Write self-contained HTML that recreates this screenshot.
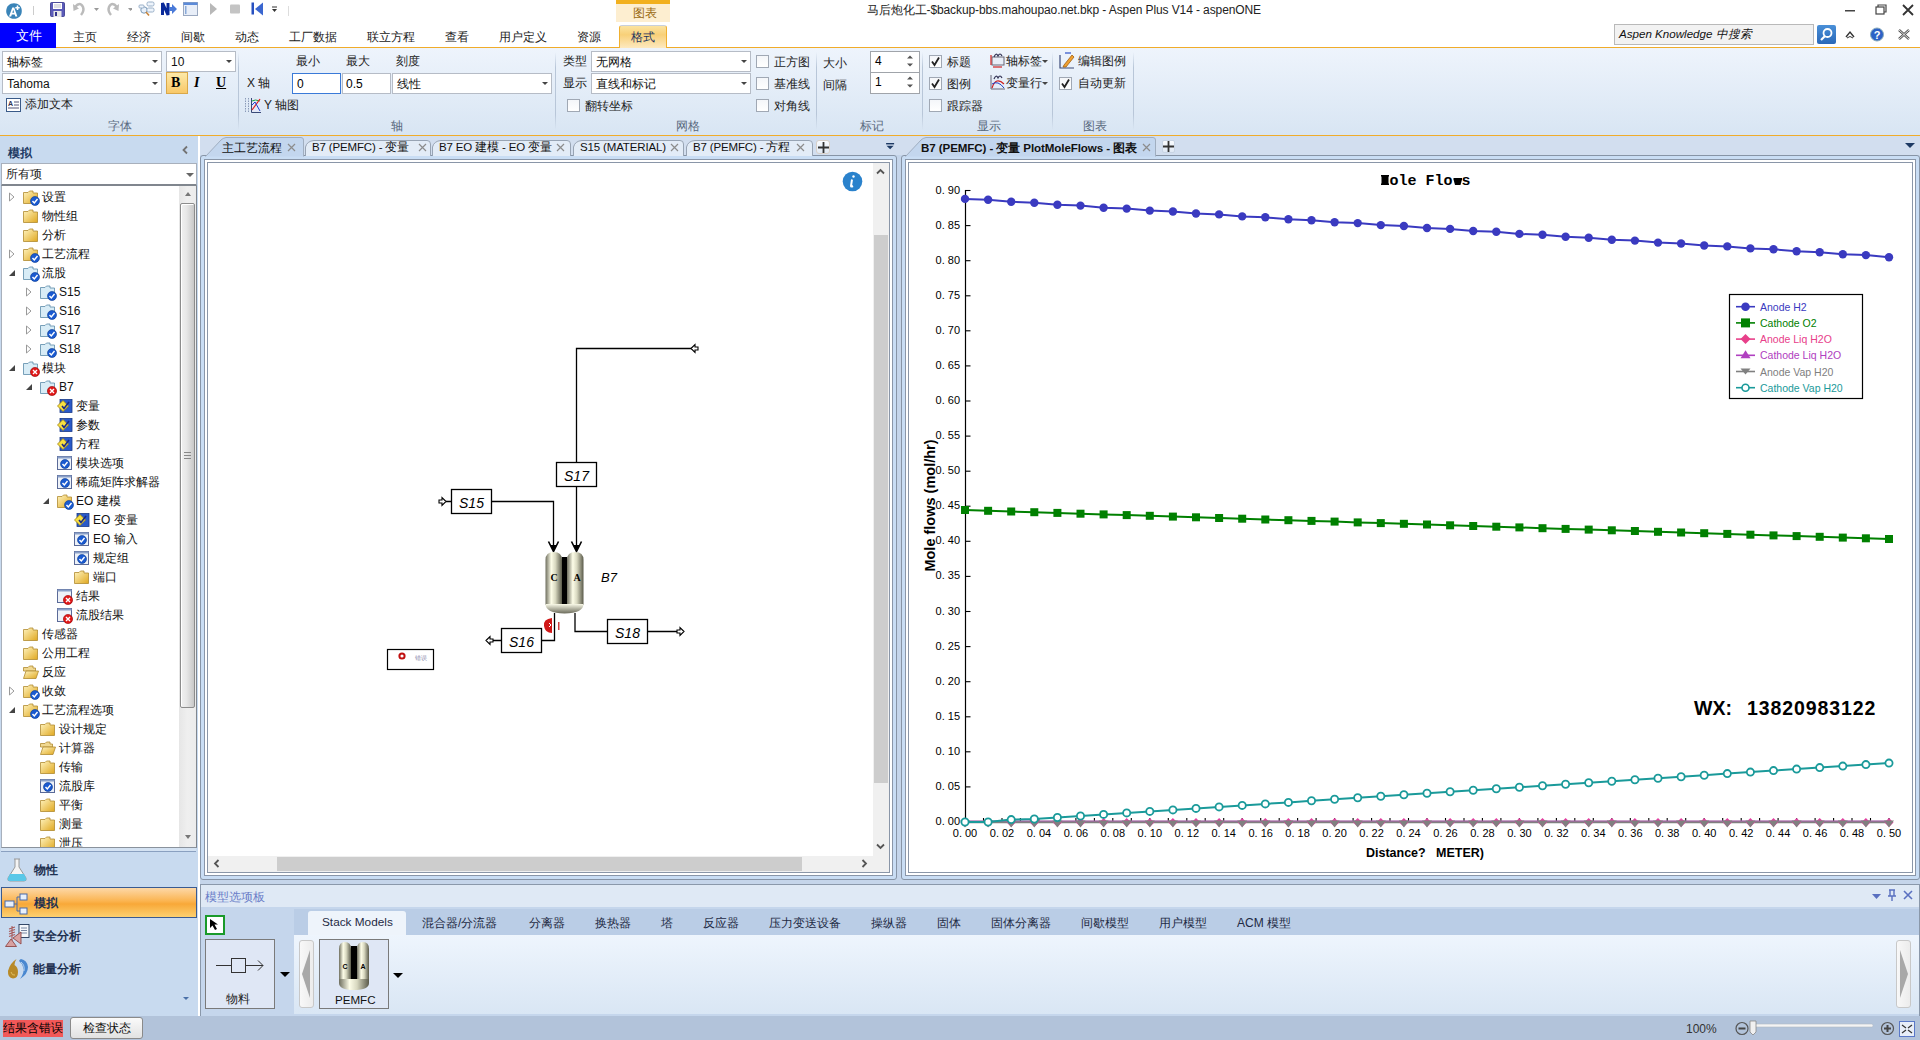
<!DOCTYPE html>
<html><head><meta charset="utf-8"><style>

*{box-sizing:border-box;margin:0;padding:0}
html,body{width:1920px;height:1040px;overflow:hidden;background:#c5d5ea;font-family:"Liberation Sans",sans-serif;font-size:12px;color:#000}
.a{position:absolute}
.t{position:absolute;white-space:nowrap;line-height:1}


.cb{position:absolute;background:#fff;border:1px solid #b6bcc6}
.dd{position:absolute;width:0;height:0;border-left:3px solid transparent;border-right:3px solid transparent;border-top:3px solid #444}
.chk{position:absolute;width:13px;height:13px;border:1px solid #a0a8b4;background:linear-gradient(#f4f6f9,#fff)}
.gl{position:absolute;color:#5a6a80;font-size:12px;white-space:nowrap;line-height:1}
.sep{position:absolute;width:1px;background:linear-gradient(rgba(180,195,215,0),#b8c6d8 20%,#b8c6d8 80%,rgba(180,195,215,0))}


.ti{position:absolute;font-size:12px;color:#111;white-space:nowrap;line-height:1}


.frm{position:absolute;border:1px solid #8794a6;border-radius:3px;background:#c9ddf4}
.frm2{position:absolute;border:1px solid #8a96a8;background:#fff}
.frm3{position:absolute;border:1px solid #8a96a8;background:#fff}
.tab{position:absolute;font-size:12px;white-space:nowrap;line-height:1;color:#111}
.xx{position:absolute;color:#8a8a8a;font-size:12px;line-height:1}

</style></head><body>
<div class="a" style="left:0px;top:0px;width:1920px;height:47px;background:#fff"></div>
<div class="a" style="left:0px;top:47px;width:1920px;height:1px;background:#f0ac2a"></div>
<svg class="a" style="left:6px;top:3px" width="16" height="16" viewBox="0 0 16 16"><path d="M8 0.2 C12.5 0.2 15.8 3 15.8 8 C15.8 12.8 12.5 15.8 8 15.8 C3.5 15.8 0.2 12.5 0.2 8 C0.2 3.5 3.5 0.2 8 0.2Z" fill="#3a84b8"/><path d="M3 13.5 L6.3 4.5 H8.2 L11.4 13.5 H9.3 L8.7 11.5 H5.8 L5.2 13.5Z M6.3 9.8 H8.2 L7.25 6.8Z" fill="#fff"/><path d="M11.5 2.5 V7 M9.3 4.75 H13.7" stroke="#fff" stroke-width="1.6"/></svg>
<div class="a" style="left:33px;top:6px;width:1px;height:9px;background:#ccc"></div>
<svg class="a" style="left:50px;top:2px" width="15" height="15" viewBox="0 0 15 15"><path d="M0.5 1.5 Q0.5 0.5 1.5 0.5 H13.5 Q14.5 0.5 14.5 1.5 V13.5 Q14.5 14.5 13.5 14.5 H1.5 Q0.5 14.5 0.5 13.5Z" fill="#5a5ab8" stroke="#33338a" stroke-width="0.8"/><rect x="3" y="1" width="9" height="6" fill="#fff"/><path d="M4 3 H11 M4 5 H11" stroke="#aab" stroke-width="0.8"/><rect x="3.5" y="9" width="8" height="6" fill="#e8e8e8"/><rect x="5" y="10" width="2" height="4" fill="#33338a"/></svg>
<svg class="a" style="left:72px;top:1px" width="60" height="16" viewBox="0 0 60 16"><path d="M3 6 Q8 0 11 6 Q12.5 10 9 14" fill="none" stroke="#bbb" stroke-width="2.5"/><path d="M1 3 L1.5 10 L7 7.5 Z" fill="#bbb"/><path d="M22 7 L27 7 L24.5 10Z" fill="#999"/><path d="M45 6 Q40 0 37 6 Q35.5 10 39 14" fill="none" stroke="#bbb" stroke-width="2.5"/><path d="M47 3 L46.5 10 L41 7.5 Z" fill="#bbb"/><path d="M56 7 L61 7 L58.5 10Z" fill="#999"/></svg>
<svg class="a" style="left:138px;top:0px" width="150" height="17" viewBox="0 0 150 17"><circle cx="6" cy="10" r="3.2" fill="#e8f0fa" stroke="#7a9ab8" stroke-width="1"/><rect x="9" y="2" width="7" height="4" rx="1.5" fill="#eef4fb" stroke="#9ab0c8"/><rect x="9" y="8" width="7" height="4" rx="1.5" fill="#eef4fb" stroke="#9ab0c8"/><rect x="1" y="5" width="5" height="3" rx="1" fill="#eef4fb" stroke="#9ab0c8"/><path d="M8 12 L11 15.5" stroke="#c8843a" stroke-width="1.6"/><path d="M24.5 15 V3 L30 15 V3" stroke="#0a2a9a" stroke-width="3" fill="none"/><path d="M31 7 L34 7 L34 4 L39 9 L34 14 L34 11 L31 11Z" fill="#4a7ad8"/><rect x="45.5" y="2.5" width="14" height="13" fill="#e8eef8" stroke="#9aa8c0"/><rect x="45.5" y="2.5" width="14" height="2.5" fill="#5b8ad8"/><rect x="47" y="6" width="1.5" height="8" fill="#8aaad8"/><path d="M72 3 L79 9 L72 15Z" fill="#b8b8b8"/><rect x="92" y="4.5" width="10" height="9" rx="1" fill="#c4c4c4"/><rect x="113.5" y="2.5" width="2.5" height="12" fill="#2750c0"/><path d="M125 2.5 L117 9 L125 15.5Z" fill="#3a66d0"/><path d="M134 7 H139" stroke="#333" stroke-width="1"/><path d="M134 9 L139 9 L136.5 12Z" fill="#333"/></svg>
<div class="a" style="left:288px;top:6px;width:1px;height:10px;background:#ddd"></div>
<div class="a" style="left:616px;top:0px;width:54px;height:22px;background:#fdeed0"></div>
<div class="a" style="left:616px;top:0px;width:54px;height:4px;background:#f2b01e"></div>
<div class="t" style="left:633px;top:7px;color:#9a6a10;font-size:12px">图表</div>
<div class="t" style="left:867px;top:4px;font-size:12px;letter-spacing:-0.1px;color:#222">马后炮化工-$backup-bbs.mahoupao.net.bkp - Aspen Plus V14 - aspenONE</div>
<svg class="a" style="left:1840px;top:2px" width="80" height="16" viewBox="0 0 80 16"><rect x="5" y="8" width="10" height="1.5" fill="#444"/><rect x="36" y="5" width="8" height="7" fill="none" stroke="#444" stroke-width="1.2"/><path d="M38 5 V3 H46 V10 H44" fill="none" stroke="#444" stroke-width="1.2"/><path d="M63 3 L73 13 M73 3 L63 13" stroke="#333" stroke-width="1.8"/></svg>
<div class="a" style="left:0px;top:23px;width:56px;height:25px;background:#0000ff"></div>
<div class="t" style="left:16px;top:30px;color:#fff;font-size:12.5px">文件</div>
<div class="t" style="left:73px;top:31px;color:#222;font-size:12px">主页</div>
<div class="t" style="left:127px;top:31px;color:#222;font-size:12px">经济</div>
<div class="t" style="left:181px;top:31px;color:#222;font-size:12px">间歇</div>
<div class="t" style="left:235px;top:31px;color:#222;font-size:12px">动态</div>
<div class="t" style="left:289px;top:31px;color:#222;font-size:12px">工厂数据</div>
<div class="t" style="left:367px;top:31px;color:#222;font-size:12px">联立方程</div>
<div class="t" style="left:445px;top:31px;color:#222;font-size:12px">查看</div>
<div class="t" style="left:499px;top:31px;color:#222;font-size:12px">用户定义</div>
<div class="t" style="left:577px;top:31px;color:#222;font-size:12px">资源</div>
<div class="a" style="left:619px;top:25px;width:48px;height:23px;background:linear-gradient(#fbe3a0,#f8d078 40%,#fde9c0);border:1px solid #f0b030;border-top-color:#c8d0dc;border-bottom:none;border-radius:3px 3px 0 0"></div>
<div class="t" style="left:631px;top:31px;color:#1e3660;font-size:12px">格式</div>
<div class="a" style="left:1614px;top:24px;width:200px;height:21px;background:#f2f2f2;border:1px solid #b9b9b9"></div>
<div class="t" style="left:1619px;top:28px;font-style:italic;font-size:11.6px;color:#111">Aspen Knowledge 中搜索</div>
<div class="a" style="left:1817px;top:25px;width:19px;height:19px;background:linear-gradient(#4a90d8,#2a68b8);border-radius:2px"></div>
<svg class="a" style="left:1819px;top:27px" width="15" height="15" viewBox="0 0 15 15"><circle cx="8.5" cy="6" r="4" fill="none" stroke="#fff" stroke-width="1.8"/><path d="M6 9 L2 13" stroke="#fff" stroke-width="2.2"/></svg>
<svg class="a" style="left:1843px;top:26px" width="77" height="18" viewBox="0 0 77 18"><path d="M3 11 L7 6 L11 11" fill="none" stroke="#333" stroke-width="1.4"/><path d="M4 12 Q7 9 10 12" fill="none" stroke="#333" stroke-width="1"/><circle cx="34" cy="8.5" r="6.5" fill="#2d62c6" stroke="#8ab" stroke-width="1"/><text x="34" y="12.5" font-size="11" font-weight="bold" fill="#fff" text-anchor="middle" font-family="Liberation Sans">?</text><path d="M56 4 L66 13 M66 4 L56 13" stroke="#555" stroke-width="2.4"/><path d="M56 4 L66 13 M66 4 L56 13" stroke="#fff" stroke-width="0.8"/></svg>
<div class="a" style="left:0px;top:48px;width:1920px;height:87px;background:linear-gradient(#eef4fc,#d8e5f3)"></div>
<div class="a" style="left:0px;top:135px;width:1920px;height:1px;background:#f0ac2a"></div>
<div class="cb" style="left:2px;top:51px;width:160px;height:21px;"></div><div class="t" style="left:7px;top:56px;font-size:12px;color:#111;">轴标签</div><div class="dd" style="left:152px;top:60px"></div>
<div class="cb" style="left:166px;top:51px;width:70px;height:21px;"></div><div class="t" style="left:171px;top:56px;font-size:12px;color:#111;">10</div><div class="dd" style="left:226px;top:60px"></div>
<div class="cb" style="left:2px;top:73px;width:160px;height:21px;"></div><div class="t" style="left:7px;top:78px;font-size:12px;color:#111;">Tahoma</div><div class="dd" style="left:152px;top:82px"></div>
<div class="a" style="left:166px;top:72px;width:22px;height:22px;background:linear-gradient(#fde9a8,#f8c868);border:1px solid #d9a84a"></div>
<div class="t" style="left:171px;top:76px;font-family:'Liberation Serif';font-weight:bold;font-size:14px">B</div>
<div class="t" style="left:194px;top:76px;font-family:'Liberation Serif';font-weight:bold;font-style:italic;font-size:14px">I</div>
<div class="t" style="left:216px;top:76px;font-family:'Liberation Serif';font-weight:bold;font-size:14px;text-decoration:underline">U</div>
<svg class="a" style="left:6px;top:98px" width="15" height="14" viewBox="0 0 15 14"><rect x="0.5" y="0.5" width="14" height="13" fill="#fff" stroke="#3a5a88"/><text x="2" y="8" font-size="7" font-weight="bold" fill="#335" font-family="Liberation Sans">A</text><path d="M8 4 H13 M8 7 H13 M2 10 H13" stroke="#557" stroke-width="1"/></svg>
<div class="t" style="left:25px;top:98px;font-size:12px;color:#222">添加文本</div>
<div class="gl" style="left:108px;top:120px">字体</div>
<div class="sep" style="left:238px;top:52px;height:78px"></div>
<div class="t" style="left:247px;top:77px;font-size:12px;color:#222">X 轴</div>
<div class="t" style="left:296px;top:55px;font-size:12px;color:#222">最小</div>
<div class="t" style="left:346px;top:55px;font-size:12px;color:#222">最大</div>
<div class="t" style="left:396px;top:55px;font-size:12px;color:#222">刻度</div>
<div class="cb" style="left:292px;top:73px;width:49px;height:21px;border:1px solid #3a7ad8"></div>
<div class="t" style="left:297px;top:78px;font-size:12px">0</div>
<div class="cb" style="left:342px;top:73px;width:49px;height:21px;"></div>
<div class="t" style="left:346px;top:78px;font-size:12px">0.5</div>
<div class="cb" style="left:392px;top:73px;width:160px;height:21px;"></div><div class="t" style="left:397px;top:78px;font-size:12px;color:#111;">线性</div><div class="dd" style="left:542px;top:82px"></div>
<svg class="a" style="left:245px;top:97px" width="17" height="17" viewBox="0 0 17 17"><path d="M0.5 1 V15 M3.5 1 V15" stroke="#8a9ab8" stroke-width="1" stroke-dasharray="1.5 1"/><rect x="6.5" y="1.5" width="9" height="13" fill="#e4e8f8"/><path d="M6.5 1 V15.5 H16" fill="none" stroke="#3a4a78" stroke-width="1"/><path d="M7 4 Q10 2 15 4" fill="none" stroke="#20a040" stroke-width="1"/><path d="M7 13 L15 2" stroke="#e02020" stroke-width="1.2"/><path d="M7 8 L10 5 L15 14" fill="none" stroke="#2040d0" stroke-width="1"/></svg>
<div class="t" style="left:264px;top:99px;font-size:12px;color:#222">Y 轴图</div>
<div class="gl" style="left:391px;top:120px">轴</div>
<div class="sep" style="left:555px;top:52px;height:78px"></div>
<div class="t" style="left:563px;top:55px;font-size:12px;color:#222">类型</div>
<div class="t" style="left:563px;top:77px;font-size:12px;color:#222">显示</div>
<div class="cb" style="left:591px;top:51px;width:160px;height:21px;"></div><div class="t" style="left:596px;top:56px;font-size:12px;color:#111;">无网格</div><div class="dd" style="left:741px;top:60px"></div>
<div class="cb" style="left:591px;top:73px;width:160px;height:21px;"></div><div class="t" style="left:596px;top:78px;font-size:12px;color:#111;">直线和标记</div><div class="dd" style="left:741px;top:82px"></div>
<div class="chk" style="left:567px;top:99px"></div>
<div class="t" style="left:585px;top:100px;font-size:12px;color:#222">翻转坐标</div>
<div class="chk" style="left:756px;top:55px"></div>
<div class="t" style="left:774px;top:56px;font-size:12px;color:#222">正方图</div>
<div class="chk" style="left:756px;top:77px"></div>
<div class="t" style="left:774px;top:78px;font-size:12px;color:#222">基准线</div>
<div class="chk" style="left:756px;top:99px"></div>
<div class="t" style="left:774px;top:100px;font-size:12px;color:#222">对角线</div>
<div class="gl" style="left:676px;top:120px">网格</div>
<div class="sep" style="left:816px;top:52px;height:78px"></div>
<div class="t" style="left:823px;top:57px;font-size:12px;color:#222">大小</div>
<div class="t" style="left:823px;top:79px;font-size:12px;color:#222">间隔</div>
<div class="cb" style="left:870px;top:51px;width:50px;height:22px;border-color:#a0a4aa"></div>
<div class="t" style="left:875px;top:55px;font-size:12px">4</div>
<svg class="a" style="left:906px;top:53px" width="8" height="16" viewBox="0 0 8 16"><path d="M1 5.5 L4 2.5 L7 5.5Z M1 10.5 L4 13.5 L7 10.5Z" fill="#555"/></svg>
<div class="cb" style="left:870px;top:72px;width:50px;height:22px;border-color:#a0a4aa"></div>
<div class="t" style="left:875px;top:76px;font-size:12px">1</div>
<svg class="a" style="left:906px;top:74px" width="8" height="16" viewBox="0 0 8 16"><path d="M1 5.5 L4 2.5 L7 5.5Z M1 10.5 L4 13.5 L7 10.5Z" fill="#555"/></svg>
<div class="gl" style="left:860px;top:120px">标记</div>
<div class="sep" style="left:922px;top:52px;height:78px"></div>
<div class="chk" style="left:929px;top:55px"></div><svg class="a" style="left:929px;top:55px" width="13" height="13" viewBox="0 0 13 13"><path d="M3 6.5 L5.5 10 L10 2.5" fill="none" stroke="#222" stroke-width="1.8"/></svg>
<div class="t" style="left:947px;top:56px;font-size:12px;color:#222">标题</div>
<div class="chk" style="left:929px;top:77px"></div><svg class="a" style="left:929px;top:77px" width="13" height="13" viewBox="0 0 13 13"><path d="M3 6.5 L5.5 10 L10 2.5" fill="none" stroke="#222" stroke-width="1.8"/></svg>
<div class="t" style="left:947px;top:78px;font-size:12px;color:#222">图例</div>
<div class="chk" style="left:929px;top:99px"></div>
<div class="t" style="left:947px;top:100px;font-size:12px;color:#222">跟踪器</div>
<svg class="a" style="left:990px;top:52px" width="16" height="16" viewBox="0 0 16 16"><rect x="2" y="5" width="12" height="8" fill="#e8eef8" stroke="#667"/><path d="M1 3 V13" stroke="#d02020" stroke-width="1.2"/><path d="M3 15 H12" stroke="#d02020" stroke-width="1.2"/><path d="M4 5 Q6 0 8 4 Q10 0 12 4" fill="none" stroke="#335" stroke-width="1.2"/></svg>
<div class="t" style="left:1006px;top:55px;font-size:12px;color:#222">轴标签</div>
<div class="dd" style="left:1042px;top:60px"></div>
<svg class="a" style="left:990px;top:74px" width="16" height="16" viewBox="0 0 16 16"><path d="M1 1 V15 H15" fill="none" stroke="#667" stroke-width="1"/><path d="M2 14 Q6 2 14 10" fill="none" stroke="#d02020" stroke-width="1.2"/><path d="M2 10 Q8 6 14 14" fill="none" stroke="#2040c0" stroke-width="1"/><path d="M4 5 Q6 0 8 4 Q10 0 12 4" fill="none" stroke="#335" stroke-width="1.2"/></svg>
<div class="t" style="left:1006px;top:77px;font-size:12px;color:#222">变量行</div>
<div class="dd" style="left:1042px;top:82px"></div>
<div class="gl" style="left:977px;top:120px">显示</div>
<div class="sep" style="left:1052px;top:52px;height:78px"></div>
<svg class="a" style="left:1059px;top:52px" width="17" height="17" viewBox="0 0 17 17"><path d="M1 3 V16 H15" fill="none" stroke="#3a4a78" stroke-width="1.2"/><path d="M5 13 L13 3 L15 5 L7 15 L4 15Z" fill="#f0a030" stroke="#a06010" stroke-width="0.8"/><path d="M6 1 H12" stroke="#2a50c8" stroke-width="1.2"/></svg>
<div class="t" style="left:1078px;top:55px;font-size:12px;color:#222">编辑图例</div>
<div class="chk" style="left:1059px;top:77px"></div><svg class="a" style="left:1059px;top:77px" width="13" height="13" viewBox="0 0 13 13"><path d="M3 6.5 L5.5 10 L10 2.5" fill="none" stroke="#222" stroke-width="1.8"/></svg>
<div class="t" style="left:1078px;top:77px;font-size:12px;color:#222">自动更新</div>
<div class="gl" style="left:1083px;top:120px">图表</div>
<div class="sep" style="left:1133px;top:52px;height:78px"></div>
<div class="a" style="left:0px;top:136px;width:198px;height:880px;background:#c8daef"></div>
<div class="a" style="left:198px;top:136px;width:2px;height:880px;background:#fff"></div>
<div class="t" style="left:8px;top:147px;font-weight:bold;font-size:12px;color:#1e3a64">模拟</div>
<svg class="a" style="left:181px;top:145px" width="8" height="10" viewBox="0 0 8 10"><path d="M6 1.5 L2.5 5 L6 8.5" fill="none" stroke="#737373" stroke-width="1.8"/></svg>
<div class="a" style="left:1px;top:163px;width:196px;height:23px;background:#fff;border:1px solid #a8b0bc;border-bottom:2px solid #80868e"></div>
<div class="t" style="left:6px;top:168px;font-size:12px;color:#222">所有项</div>
<div class="dd" style="left:186px;top:173px;border-top-color:#666;border-left-width:4px;border-right-width:4px;border-top-width:4px"></div>
<div class="a" style="left:1px;top:186px;width:196px;height:662px;background:#fff;border-left:1px solid #a8b0bc;border-right:1px solid #80868e;border-bottom:1px solid #8a929c"></div>
<div class="a" style="left:179px;top:186px;width:17px;height:661px;background:linear-gradient(90deg,#e6e6e6,#efefef,#ececec)"></div>
<div class="a" style="left:185px;top:192px;width:0;height:0;border-left:3.5px solid transparent;border-right:3.5px solid transparent;border-bottom:4px solid #777"></div>
<div class="a" style="left:185px;top:835px;width:0;height:0;border-left:3.5px solid transparent;border-right:3.5px solid transparent;border-top:4px solid #777"></div>
<div class="a" style="left:180px;top:203px;width:15px;height:505px;background:linear-gradient(90deg,#f0f0f0,#e8e8e8 40%,#c8c8c8);border:1px solid #8c8c8c;border-radius:2px;box-shadow:inset 1px 1px 0 #fff"></div>
<div class="a" style="left:184px;top:452px;width:7px;height:1px;background:#888"></div><div class="a" style="left:184px;top:455px;width:7px;height:1px;background:#888"></div><div class="a" style="left:184px;top:458px;width:7px;height:1px;background:#888"></div>
<div class="a" style="left:0;top:187px;width:180px;height:660px;overflow:hidden"><div class="a" style="left:0;top:-187px;width:180px;height:1040px"><svg class="a" style="left:8px;top:192px" width="8" height="10" viewBox="0 0 8 10"><path d="M1.5 1 L6 5 L1.5 9Z" fill="#fff" stroke="#999" stroke-width="1"/></svg><svg class="a" style="left:23px;top:190px" width="16" height="14" viewBox="0 0 16 14"><defs><linearGradient id="fg" x1="0" y1="0" x2="1" y2="1"><stop offset="0" stop-color="#fff4c0"/><stop offset="1" stop-color="#e0a820"/></linearGradient></defs><path d="M0.5 2.5 H5 L6.5 1 H10 V3 H14.5 V13.5 H0.5Z" fill="url(#fg)" stroke="#b08a30" stroke-width="0.8"/></svg><svg class="a" style="left:30px;top:196px" width="10" height="10" viewBox="0 0 10 10"><circle cx="5" cy="5" r="4.5" fill="#1a5ad0" stroke="#0a3a90" stroke-width="0.6"/><path d="M2.5 5 L4.3 7 L7.5 3" fill="none" stroke="#fff" stroke-width="1.4"/></svg><div class="ti" style="left:42px;top:191px">设置</div><svg class="a" style="left:23px;top:209px" width="16" height="14" viewBox="0 0 16 14"><defs><linearGradient id="fg" x1="0" y1="0" x2="1" y2="1"><stop offset="0" stop-color="#fff4c0"/><stop offset="1" stop-color="#e0a820"/></linearGradient></defs><path d="M0.5 2.5 H5 L6.5 1 H10 V3 H14.5 V13.5 H0.5Z" fill="url(#fg)" stroke="#b08a30" stroke-width="0.8"/></svg><div class="ti" style="left:42px;top:210px">物性组</div><svg class="a" style="left:23px;top:228px" width="16" height="14" viewBox="0 0 16 14"><defs><linearGradient id="fg" x1="0" y1="0" x2="1" y2="1"><stop offset="0" stop-color="#fff4c0"/><stop offset="1" stop-color="#e0a820"/></linearGradient></defs><path d="M0.5 2.5 H5 L6.5 1 H10 V3 H14.5 V13.5 H0.5Z" fill="url(#fg)" stroke="#b08a30" stroke-width="0.8"/></svg><div class="ti" style="left:42px;top:229px">分析</div><svg class="a" style="left:8px;top:249px" width="8" height="10" viewBox="0 0 8 10"><path d="M1.5 1 L6 5 L1.5 9Z" fill="#fff" stroke="#999" stroke-width="1"/></svg><svg class="a" style="left:23px;top:247px" width="16" height="14" viewBox="0 0 16 14"><defs><linearGradient id="fg" x1="0" y1="0" x2="1" y2="1"><stop offset="0" stop-color="#fff4c0"/><stop offset="1" stop-color="#e0a820"/></linearGradient></defs><path d="M0.5 2.5 H5 L6.5 1 H10 V3 H14.5 V13.5 H0.5Z" fill="url(#fg)" stroke="#b08a30" stroke-width="0.8"/></svg><svg class="a" style="left:30px;top:253px" width="10" height="10" viewBox="0 0 10 10"><circle cx="5" cy="5" r="4.5" fill="#1a5ad0" stroke="#0a3a90" stroke-width="0.6"/><path d="M2.5 5 L4.3 7 L7.5 3" fill="none" stroke="#fff" stroke-width="1.4"/></svg><div class="ti" style="left:42px;top:248px">工艺流程</div><svg class="a" style="left:8px;top:269px" width="8" height="8" viewBox="0 0 8 8"><path d="M7 1 L7 7 L1 7Z" fill="#444"/></svg><svg class="a" style="left:23px;top:266px" width="16" height="14" viewBox="0 0 16 14"><path d="M0.5 2.5 H5 L6.5 1 H10 V3 H14.5 V13.5 H0.5Z" fill="#d8ecf6" stroke="#5a8aa8" stroke-width="0.8"/></svg><svg class="a" style="left:30px;top:272px" width="10" height="10" viewBox="0 0 10 10"><circle cx="5" cy="5" r="4.5" fill="#1a5ad0" stroke="#0a3a90" stroke-width="0.6"/><path d="M2.5 5 L4.3 7 L7.5 3" fill="none" stroke="#fff" stroke-width="1.4"/></svg><div class="ti" style="left:42px;top:267px">流股</div><svg class="a" style="left:25px;top:287px" width="8" height="10" viewBox="0 0 8 10"><path d="M1.5 1 L6 5 L1.5 9Z" fill="#fff" stroke="#999" stroke-width="1"/></svg><svg class="a" style="left:40px;top:285px" width="16" height="14" viewBox="0 0 16 14"><path d="M0.5 2.5 H5 L6.5 1 H10 V3 H14.5 V13.5 H0.5Z" fill="#d8ecf6" stroke="#5a8aa8" stroke-width="0.8"/></svg><svg class="a" style="left:47px;top:291px" width="10" height="10" viewBox="0 0 10 10"><circle cx="5" cy="5" r="4.5" fill="#1a5ad0" stroke="#0a3a90" stroke-width="0.6"/><path d="M2.5 5 L4.3 7 L7.5 3" fill="none" stroke="#fff" stroke-width="1.4"/></svg><div class="ti" style="left:59px;top:286px">S15</div><svg class="a" style="left:25px;top:306px" width="8" height="10" viewBox="0 0 8 10"><path d="M1.5 1 L6 5 L1.5 9Z" fill="#fff" stroke="#999" stroke-width="1"/></svg><svg class="a" style="left:40px;top:304px" width="16" height="14" viewBox="0 0 16 14"><path d="M0.5 2.5 H5 L6.5 1 H10 V3 H14.5 V13.5 H0.5Z" fill="#d8ecf6" stroke="#5a8aa8" stroke-width="0.8"/></svg><svg class="a" style="left:47px;top:310px" width="10" height="10" viewBox="0 0 10 10"><circle cx="5" cy="5" r="4.5" fill="#1a5ad0" stroke="#0a3a90" stroke-width="0.6"/><path d="M2.5 5 L4.3 7 L7.5 3" fill="none" stroke="#fff" stroke-width="1.4"/></svg><div class="ti" style="left:59px;top:305px">S16</div><svg class="a" style="left:25px;top:325px" width="8" height="10" viewBox="0 0 8 10"><path d="M1.5 1 L6 5 L1.5 9Z" fill="#fff" stroke="#999" stroke-width="1"/></svg><svg class="a" style="left:40px;top:323px" width="16" height="14" viewBox="0 0 16 14"><path d="M0.5 2.5 H5 L6.5 1 H10 V3 H14.5 V13.5 H0.5Z" fill="#d8ecf6" stroke="#5a8aa8" stroke-width="0.8"/></svg><svg class="a" style="left:47px;top:329px" width="10" height="10" viewBox="0 0 10 10"><circle cx="5" cy="5" r="4.5" fill="#1a5ad0" stroke="#0a3a90" stroke-width="0.6"/><path d="M2.5 5 L4.3 7 L7.5 3" fill="none" stroke="#fff" stroke-width="1.4"/></svg><div class="ti" style="left:59px;top:324px">S17</div><svg class="a" style="left:25px;top:344px" width="8" height="10" viewBox="0 0 8 10"><path d="M1.5 1 L6 5 L1.5 9Z" fill="#fff" stroke="#999" stroke-width="1"/></svg><svg class="a" style="left:40px;top:342px" width="16" height="14" viewBox="0 0 16 14"><path d="M0.5 2.5 H5 L6.5 1 H10 V3 H14.5 V13.5 H0.5Z" fill="#d8ecf6" stroke="#5a8aa8" stroke-width="0.8"/></svg><svg class="a" style="left:47px;top:348px" width="10" height="10" viewBox="0 0 10 10"><circle cx="5" cy="5" r="4.5" fill="#1a5ad0" stroke="#0a3a90" stroke-width="0.6"/><path d="M2.5 5 L4.3 7 L7.5 3" fill="none" stroke="#fff" stroke-width="1.4"/></svg><div class="ti" style="left:59px;top:343px">S18</div><svg class="a" style="left:8px;top:364px" width="8" height="8" viewBox="0 0 8 8"><path d="M7 1 L7 7 L1 7Z" fill="#444"/></svg><svg class="a" style="left:23px;top:361px" width="16" height="14" viewBox="0 0 16 14"><path d="M0.5 2.5 H5 L6.5 1 H10 V3 H14.5 V13.5 H0.5Z" fill="#d8ecf6" stroke="#5a8aa8" stroke-width="0.8"/></svg><svg class="a" style="left:30px;top:367px" width="10" height="10" viewBox="0 0 10 10"><circle cx="5" cy="5" r="4.6" fill="#e01818" stroke="#900" stroke-width="0.6"/><path d="M3 3 L7 7 M7 3 L3 7" stroke="#fff" stroke-width="1.4"/></svg><div class="ti" style="left:42px;top:362px">模块</div><svg class="a" style="left:25px;top:383px" width="8" height="8" viewBox="0 0 8 8"><path d="M7 1 L7 7 L1 7Z" fill="#444"/></svg><svg class="a" style="left:40px;top:380px" width="16" height="14" viewBox="0 0 16 14"><path d="M0.5 2.5 H5 L6.5 1 H10 V3 H14.5 V13.5 H0.5Z" fill="#d8ecf6" stroke="#5a8aa8" stroke-width="0.8"/></svg><svg class="a" style="left:47px;top:386px" width="10" height="10" viewBox="0 0 10 10"><circle cx="5" cy="5" r="4.6" fill="#e01818" stroke="#900" stroke-width="0.6"/><path d="M3 3 L7 7 M7 3 L3 7" stroke="#fff" stroke-width="1.4"/></svg><div class="ti" style="left:59px;top:381px">B7</div><svg class="a" style="left:57px;top:399px" width="16" height="15" viewBox="0 0 16 15"><rect x="3" y="0.5" width="12" height="13" fill="#2a5ac8" stroke="#1a3a88" stroke-width="0.8"/><path d="M0.5 7 L6 1.5 L11.5 7 L6 12.5Z" fill="#f8e040" stroke="#a08010" stroke-width="0.8"/><path d="M5 7 L7 9.5 L12 3" fill="none" stroke="#1a2a88" stroke-width="1.6"/></svg><div class="ti" style="left:76px;top:400px">变量</div><svg class="a" style="left:57px;top:418px" width="16" height="15" viewBox="0 0 16 15"><rect x="3" y="0.5" width="12" height="13" fill="#2a5ac8" stroke="#1a3a88" stroke-width="0.8"/><path d="M0.5 7 L6 1.5 L11.5 7 L6 12.5Z" fill="#f8e040" stroke="#a08010" stroke-width="0.8"/><path d="M5 7 L7 9.5 L12 3" fill="none" stroke="#1a2a88" stroke-width="1.6"/></svg><div class="ti" style="left:76px;top:419px">参数</div><svg class="a" style="left:57px;top:437px" width="16" height="15" viewBox="0 0 16 15"><rect x="3" y="0.5" width="12" height="13" fill="#2a5ac8" stroke="#1a3a88" stroke-width="0.8"/><path d="M0.5 7 L6 1.5 L11.5 7 L6 12.5Z" fill="#f8e040" stroke="#a08010" stroke-width="0.8"/><path d="M5 7 L7 9.5 L12 3" fill="none" stroke="#1a2a88" stroke-width="1.6"/></svg><div class="ti" style="left:76px;top:438px">方程</div><svg class="a" style="left:57px;top:456px" width="16" height="14" viewBox="0 0 16 14"><rect x="0.5" y="0.5" width="14" height="13" fill="#eef2f8" stroke="#5a6a98" stroke-width="1"/><rect x="0.5" y="0.5" width="14" height="2" fill="#8aa0c8"/></svg><svg class="a" style="left:60px;top:459px" width="10" height="10" viewBox="0 0 10 10"><circle cx="5" cy="5" r="4.5" fill="#1a5ad0" stroke="#0a3a90" stroke-width="0.6"/><path d="M2.5 5 L4.3 7 L7.5 3" fill="none" stroke="#fff" stroke-width="1.4"/></svg><div class="ti" style="left:76px;top:457px">模块选项</div><svg class="a" style="left:57px;top:475px" width="16" height="14" viewBox="0 0 16 14"><rect x="0.5" y="0.5" width="14" height="13" fill="#eef2f8" stroke="#5a6a98" stroke-width="1"/><rect x="0.5" y="0.5" width="14" height="2" fill="#8aa0c8"/></svg><svg class="a" style="left:60px;top:478px" width="10" height="10" viewBox="0 0 10 10"><circle cx="5" cy="5" r="4.5" fill="#1a5ad0" stroke="#0a3a90" stroke-width="0.6"/><path d="M2.5 5 L4.3 7 L7.5 3" fill="none" stroke="#fff" stroke-width="1.4"/></svg><div class="ti" style="left:76px;top:476px">稀疏矩阵求解器</div><svg class="a" style="left:42px;top:497px" width="8" height="8" viewBox="0 0 8 8"><path d="M7 1 L7 7 L1 7Z" fill="#444"/></svg><svg class="a" style="left:57px;top:494px" width="16" height="14" viewBox="0 0 16 14"><defs><linearGradient id="fg" x1="0" y1="0" x2="1" y2="1"><stop offset="0" stop-color="#fff4c0"/><stop offset="1" stop-color="#e0a820"/></linearGradient></defs><path d="M0.5 2.5 H5 L6.5 1 H10 V3 H14.5 V13.5 H0.5Z" fill="url(#fg)" stroke="#b08a30" stroke-width="0.8"/></svg><svg class="a" style="left:64px;top:500px" width="10" height="10" viewBox="0 0 10 10"><circle cx="5" cy="5" r="4.5" fill="#1a5ad0" stroke="#0a3a90" stroke-width="0.6"/><path d="M2.5 5 L4.3 7 L7.5 3" fill="none" stroke="#fff" stroke-width="1.4"/></svg><div class="ti" style="left:76px;top:495px">EO 建模</div><svg class="a" style="left:74px;top:513px" width="16" height="15" viewBox="0 0 16 15"><rect x="3" y="0.5" width="12" height="13" fill="#2a5ac8" stroke="#1a3a88" stroke-width="0.8"/><path d="M0.5 7 L6 1.5 L11.5 7 L6 12.5Z" fill="#f8e040" stroke="#a08010" stroke-width="0.8"/><path d="M5 7 L7 9.5 L12 3" fill="none" stroke="#1a2a88" stroke-width="1.6"/></svg><div class="ti" style="left:93px;top:514px">EO 变量</div><svg class="a" style="left:74px;top:532px" width="16" height="14" viewBox="0 0 16 14"><rect x="0.5" y="0.5" width="14" height="13" fill="#eef2f8" stroke="#5a6a98" stroke-width="1"/><rect x="0.5" y="0.5" width="14" height="2" fill="#8aa0c8"/></svg><svg class="a" style="left:77px;top:535px" width="10" height="10" viewBox="0 0 10 10"><circle cx="5" cy="5" r="4.5" fill="#1a5ad0" stroke="#0a3a90" stroke-width="0.6"/><path d="M2.5 5 L4.3 7 L7.5 3" fill="none" stroke="#fff" stroke-width="1.4"/></svg><div class="ti" style="left:93px;top:533px">EO 输入</div><svg class="a" style="left:74px;top:551px" width="16" height="14" viewBox="0 0 16 14"><rect x="0.5" y="0.5" width="14" height="13" fill="#eef2f8" stroke="#5a6a98" stroke-width="1"/><rect x="0.5" y="0.5" width="14" height="2" fill="#8aa0c8"/></svg><svg class="a" style="left:77px;top:554px" width="10" height="10" viewBox="0 0 10 10"><circle cx="5" cy="5" r="4.5" fill="#1a5ad0" stroke="#0a3a90" stroke-width="0.6"/><path d="M2.5 5 L4.3 7 L7.5 3" fill="none" stroke="#fff" stroke-width="1.4"/></svg><div class="ti" style="left:93px;top:552px">规定组</div><svg class="a" style="left:74px;top:570px" width="16" height="14" viewBox="0 0 16 14"><defs><linearGradient id="fg" x1="0" y1="0" x2="1" y2="1"><stop offset="0" stop-color="#fff4c0"/><stop offset="1" stop-color="#e0a820"/></linearGradient></defs><path d="M0.5 2.5 H5 L6.5 1 H10 V3 H14.5 V13.5 H0.5Z" fill="url(#fg)" stroke="#b08a30" stroke-width="0.8"/></svg><div class="ti" style="left:93px;top:571px">端口</div><svg class="a" style="left:57px;top:589px" width="16" height="14" viewBox="0 0 16 14"><rect x="0.5" y="0.5" width="14" height="13" fill="#eef2f8" stroke="#5a6a98" stroke-width="1"/><rect x="0.5" y="0.5" width="14" height="2" fill="#8aa0c8"/></svg><svg class="a" style="left:63px;top:595px" width="10" height="10" viewBox="0 0 10 10"><circle cx="5" cy="5" r="4.6" fill="#e01818" stroke="#900" stroke-width="0.6"/><path d="M3 3 L7 7 M7 3 L3 7" stroke="#fff" stroke-width="1.4"/></svg><div class="ti" style="left:76px;top:590px">结果</div><svg class="a" style="left:57px;top:608px" width="16" height="14" viewBox="0 0 16 14"><rect x="0.5" y="0.5" width="14" height="13" fill="#eef2f8" stroke="#5a6a98" stroke-width="1"/><rect x="0.5" y="0.5" width="14" height="2" fill="#8aa0c8"/></svg><svg class="a" style="left:63px;top:614px" width="10" height="10" viewBox="0 0 10 10"><circle cx="5" cy="5" r="4.6" fill="#e01818" stroke="#900" stroke-width="0.6"/><path d="M3 3 L7 7 M7 3 L3 7" stroke="#fff" stroke-width="1.4"/></svg><div class="ti" style="left:76px;top:609px">流股结果</div><svg class="a" style="left:23px;top:627px" width="16" height="14" viewBox="0 0 16 14"><defs><linearGradient id="fg" x1="0" y1="0" x2="1" y2="1"><stop offset="0" stop-color="#fff4c0"/><stop offset="1" stop-color="#e0a820"/></linearGradient></defs><path d="M0.5 2.5 H5 L6.5 1 H10 V3 H14.5 V13.5 H0.5Z" fill="url(#fg)" stroke="#b08a30" stroke-width="0.8"/></svg><div class="ti" style="left:42px;top:628px">传感器</div><svg class="a" style="left:23px;top:646px" width="16" height="14" viewBox="0 0 16 14"><defs><linearGradient id="fg" x1="0" y1="0" x2="1" y2="1"><stop offset="0" stop-color="#fff4c0"/><stop offset="1" stop-color="#e0a820"/></linearGradient></defs><path d="M0.5 2.5 H5 L6.5 1 H10 V3 H14.5 V13.5 H0.5Z" fill="url(#fg)" stroke="#b08a30" stroke-width="0.8"/></svg><div class="ti" style="left:42px;top:647px">公用工程</div><svg class="a" style="left:23px;top:665px" width="16" height="14" viewBox="0 0 16 14"><defs><linearGradient id="fo" x1="0" y1="0" x2="1" y2="1"><stop offset="0" stop-color="#fff4c0"/><stop offset="1" stop-color="#e0a820"/></linearGradient></defs><path d="M0.5 2.5 H5 L6.5 1 H10 V3 H12.5 V6 H0.5Z" fill="#f0d890" stroke="#b08a30" stroke-width="0.8"/><path d="M3 6 H15.5 L13 13.5 H0.5Z" fill="url(#fo)" stroke="#b08a30" stroke-width="0.8"/></svg><div class="ti" style="left:42px;top:666px">反应</div><svg class="a" style="left:8px;top:686px" width="8" height="10" viewBox="0 0 8 10"><path d="M1.5 1 L6 5 L1.5 9Z" fill="#fff" stroke="#999" stroke-width="1"/></svg><svg class="a" style="left:23px;top:684px" width="16" height="14" viewBox="0 0 16 14"><defs><linearGradient id="fg" x1="0" y1="0" x2="1" y2="1"><stop offset="0" stop-color="#fff4c0"/><stop offset="1" stop-color="#e0a820"/></linearGradient></defs><path d="M0.5 2.5 H5 L6.5 1 H10 V3 H14.5 V13.5 H0.5Z" fill="url(#fg)" stroke="#b08a30" stroke-width="0.8"/></svg><svg class="a" style="left:30px;top:690px" width="10" height="10" viewBox="0 0 10 10"><circle cx="5" cy="5" r="4.5" fill="#1a5ad0" stroke="#0a3a90" stroke-width="0.6"/><path d="M2.5 5 L4.3 7 L7.5 3" fill="none" stroke="#fff" stroke-width="1.4"/></svg><div class="ti" style="left:42px;top:685px">收敛</div><svg class="a" style="left:8px;top:706px" width="8" height="8" viewBox="0 0 8 8"><path d="M7 1 L7 7 L1 7Z" fill="#444"/></svg><svg class="a" style="left:23px;top:703px" width="16" height="14" viewBox="0 0 16 14"><defs><linearGradient id="fg" x1="0" y1="0" x2="1" y2="1"><stop offset="0" stop-color="#fff4c0"/><stop offset="1" stop-color="#e0a820"/></linearGradient></defs><path d="M0.5 2.5 H5 L6.5 1 H10 V3 H14.5 V13.5 H0.5Z" fill="url(#fg)" stroke="#b08a30" stroke-width="0.8"/></svg><svg class="a" style="left:30px;top:709px" width="10" height="10" viewBox="0 0 10 10"><circle cx="5" cy="5" r="4.5" fill="#1a5ad0" stroke="#0a3a90" stroke-width="0.6"/><path d="M2.5 5 L4.3 7 L7.5 3" fill="none" stroke="#fff" stroke-width="1.4"/></svg><div class="ti" style="left:42px;top:704px">工艺流程选项</div><svg class="a" style="left:40px;top:722px" width="16" height="14" viewBox="0 0 16 14"><defs><linearGradient id="fg" x1="0" y1="0" x2="1" y2="1"><stop offset="0" stop-color="#fff4c0"/><stop offset="1" stop-color="#e0a820"/></linearGradient></defs><path d="M0.5 2.5 H5 L6.5 1 H10 V3 H14.5 V13.5 H0.5Z" fill="url(#fg)" stroke="#b08a30" stroke-width="0.8"/></svg><div class="ti" style="left:59px;top:723px">设计规定</div><svg class="a" style="left:40px;top:741px" width="16" height="14" viewBox="0 0 16 14"><defs><linearGradient id="fo" x1="0" y1="0" x2="1" y2="1"><stop offset="0" stop-color="#fff4c0"/><stop offset="1" stop-color="#e0a820"/></linearGradient></defs><path d="M0.5 2.5 H5 L6.5 1 H10 V3 H12.5 V6 H0.5Z" fill="#f0d890" stroke="#b08a30" stroke-width="0.8"/><path d="M3 6 H15.5 L13 13.5 H0.5Z" fill="url(#fo)" stroke="#b08a30" stroke-width="0.8"/></svg><div class="ti" style="left:59px;top:742px">计算器</div><svg class="a" style="left:40px;top:760px" width="16" height="14" viewBox="0 0 16 14"><defs><linearGradient id="fg" x1="0" y1="0" x2="1" y2="1"><stop offset="0" stop-color="#fff4c0"/><stop offset="1" stop-color="#e0a820"/></linearGradient></defs><path d="M0.5 2.5 H5 L6.5 1 H10 V3 H14.5 V13.5 H0.5Z" fill="url(#fg)" stroke="#b08a30" stroke-width="0.8"/></svg><div class="ti" style="left:59px;top:761px">传输</div><svg class="a" style="left:40px;top:779px" width="16" height="14" viewBox="0 0 16 14"><rect x="0.5" y="0.5" width="14" height="13" fill="#eef2f8" stroke="#5a6a98" stroke-width="1"/><rect x="0.5" y="0.5" width="14" height="2" fill="#8aa0c8"/></svg><svg class="a" style="left:43px;top:782px" width="10" height="10" viewBox="0 0 10 10"><circle cx="5" cy="5" r="4.5" fill="#1a5ad0" stroke="#0a3a90" stroke-width="0.6"/><path d="M2.5 5 L4.3 7 L7.5 3" fill="none" stroke="#fff" stroke-width="1.4"/></svg><div class="ti" style="left:59px;top:780px">流股库</div><svg class="a" style="left:40px;top:798px" width="16" height="14" viewBox="0 0 16 14"><defs><linearGradient id="fg" x1="0" y1="0" x2="1" y2="1"><stop offset="0" stop-color="#fff4c0"/><stop offset="1" stop-color="#e0a820"/></linearGradient></defs><path d="M0.5 2.5 H5 L6.5 1 H10 V3 H14.5 V13.5 H0.5Z" fill="url(#fg)" stroke="#b08a30" stroke-width="0.8"/></svg><div class="ti" style="left:59px;top:799px">平衡</div><svg class="a" style="left:40px;top:817px" width="16" height="14" viewBox="0 0 16 14"><defs><linearGradient id="fg" x1="0" y1="0" x2="1" y2="1"><stop offset="0" stop-color="#fff4c0"/><stop offset="1" stop-color="#e0a820"/></linearGradient></defs><path d="M0.5 2.5 H5 L6.5 1 H10 V3 H14.5 V13.5 H0.5Z" fill="url(#fg)" stroke="#b08a30" stroke-width="0.8"/></svg><div class="ti" style="left:59px;top:818px">测量</div><svg class="a" style="left:40px;top:836px" width="16" height="14" viewBox="0 0 16 14"><defs><linearGradient id="fg" x1="0" y1="0" x2="1" y2="1"><stop offset="0" stop-color="#fff4c0"/><stop offset="1" stop-color="#e0a820"/></linearGradient></defs><path d="M0.5 2.5 H5 L6.5 1 H10 V3 H14.5 V13.5 H0.5Z" fill="url(#fg)" stroke="#b08a30" stroke-width="0.8"/></svg><div class="ti" style="left:59px;top:837px">泄压</div></div></div>
<div class="a" style="left:1px;top:848px;width:195px;height:4px;background:#d4e2f2;border-bottom:1px solid #8aa0c0"></div>
<svg class="a" style="left:6px;top:858px" width="22" height="24" viewBox="0 0 22 24"><path d="M8 1 H14 M9 1 V9 L2 20 Q1 23 4 23 H18 Q21 23 20 20 L13 9 V1" fill="#f4f4f4" stroke="#999" stroke-width="1"/><path d="M4 16 H18 L20 20 Q21 23 18 23 H4 Q1 23 2 20Z" fill="#5ac8e8"/></svg>
<div class="t" style="left:34px;top:864px;font-weight:bold;font-size:12px;color:#1e3050">物性</div>
<div class="a" style="left:1px;top:887px;width:196px;height:31px;background:linear-gradient(#fdd8a8,#fbb450 45%,#f8a838 55%,#fcd070);border:1px solid #3a5a90"></div>
<svg class="a" style="left:4px;top:893px" width="26" height="22" viewBox="0 0 26 22"><rect x="1" y="8" width="9" height="6" fill="#e8f0fc" stroke="#4a6aa8"/><rect x="16" y="1" width="7" height="6" fill="#e8f0fc" stroke="#4a6aa8"/><rect x="16" y="15" width="7" height="6" fill="#e8f0fc" stroke="#4a6aa8"/><path d="M10 11 H13 M13 4 V18 M13 4 H16 M13 18 H16" fill="none" stroke="#4a6aa8"/></svg>
<div class="t" style="left:34px;top:897px;font-weight:bold;font-size:12px;color:#1e3050">模拟</div>
<svg class="a" style="left:4px;top:923px" width="28" height="26" viewBox="0 0 28 26"><rect x="15" y="1.5" width="10" height="13" fill="#f4f6fa" stroke="#23385a" stroke-width="0.9"/><path d="M17 5 H23 M17 7.5 H23 M17 10 H23" stroke="#6a7a98" stroke-width="0.9"/><path d="M8 3 V18 M5 6 L11 4 M5 8.5 L11 6.5 M5 11 L11 9 M5 13.5 L11 11.5" stroke="#a85a5a" stroke-width="1.1"/><path d="M1.5 23.5 L7 16 L12.5 23.5Z" fill="#d8a0a0" stroke="#904848" stroke-width="0.9"/><path d="M9 15 L17 9 L17 21Z" fill="#d8a0a0" stroke="#904848" stroke-width="0.9"/></svg>
<div class="t" style="left:33px;top:930px;font-weight:bold;font-size:12px;color:#1e3050">安全分析</div>
<svg class="a" style="left:6px;top:958px" width="24" height="22" viewBox="0 0 24 22"><path d="M10.5 1 Q4 5 2 13 Q1.5 20 7 20.5 Q12 20.5 12 14 Q12 9 8.5 7 Q9 3 10.5 1Z" fill="#b88a28"/><path d="M5 14 Q6 18 9 17" stroke="#e0c060" stroke-width="1" fill="none"/><path d="M15 1 Q21 2 22 9 Q22 16 14 21 Q19 14 17 9 Q16 5 13 3 Q13.5 1.5 15 1Z" fill="#4a88d0"/><path d="M15 4 Q19 7 18 13" stroke="#c8e0f8" stroke-width="0.8" fill="none"/></svg>
<div class="t" style="left:33px;top:963px;font-weight:bold;font-size:12px;color:#1e3050">能量分析</div>
<div class="a" style="left:183px;top:997px;width:0;height:0;border-left:3px solid transparent;border-right:3px solid transparent;border-top:3px solid #4a70a8"></div>
<div class="a" style="left:200px;top:136px;width:1720px;height:19px;background:#d2deef"></div>
<div class="frm" style="left:200px;top:155px;width:697px;height:725px;"></div><div class="frm2" style="left:204px;top:159px;width:689px;height:717px;"></div><div class="frm3" style="left:207px;top:162px;width:683px;height:711px;"></div>
<div class="frm" style="left:901px;top:155px;width:1019px;height:725px;"></div><div class="frm2" style="left:905px;top:159px;width:1011px;height:717px;"></div><div class="frm3" style="left:908px;top:162px;width:1005px;height:711px;"></div>
<div class="a" style="left:203px;top:155px;width:200px;height:1px;background:#8794a6"></div>
<svg class="a" style="left:205px;top:137px" width="100" height="20" viewBox="0 0 100 20"><path d="M0.5 19.5 L16 3 Q18 1 21 0.5 H96.0 Q98.5 0.5 98.5 3 V19.5" fill="#c3d6ee" stroke="#a0aec0" stroke-width="1"/></svg>
<div class="t" style="left:222px;top:142px;font-size:12px;color:#111">主工艺流程</div>
<svg class="a" style="left:287px;top:143px" width="9" height="9" viewBox="0 0 9 9"><path d="M1 1 L8 8 M8 1 L1 8" stroke="#8c8c8c" stroke-width="1.2"/></svg>
<svg class="a" style="left:305px;top:140px" width="126" height="16" viewBox="0 0 126 16"><path d="M0.5 16 V7 Q2 1 9 0.5 H122.0 Q125.5 0.5 125.5 4 V16" fill="#e3ecf7" stroke="#98a4b4" stroke-width="1"/></svg>
<div class="t" style="left:312px;top:142px;font-size:11.5px;letter-spacing:-0.15px;color:#111">B7 (PEMFC) - 变量</div>
<svg class="a" style="left:418px;top:143px" width="9" height="9" viewBox="0 0 9 9"><path d="M1 1 L8 8 M8 1 L1 8" stroke="#8c8c8c" stroke-width="1.2"/></svg>
<svg class="a" style="left:432px;top:140px" width="139" height="16" viewBox="0 0 139 16"><path d="M0.5 16 V7 Q2 1 9 0.5 H135.0 Q138.5 0.5 138.5 4 V16" fill="#e3ecf7" stroke="#98a4b4" stroke-width="1"/></svg>
<div class="t" style="left:439px;top:142px;font-size:11.5px;letter-spacing:-0.15px;color:#111">B7 EO 建模 - EO 变量</div>
<svg class="a" style="left:556px;top:143px" width="9" height="9" viewBox="0 0 9 9"><path d="M1 1 L8 8 M8 1 L1 8" stroke="#8c8c8c" stroke-width="1.2"/></svg>
<svg class="a" style="left:573px;top:140px" width="111" height="16" viewBox="0 0 111 16"><path d="M0.5 16 V7 Q2 1 9 0.5 H107.0 Q110.5 0.5 110.5 4 V16" fill="#e3ecf7" stroke="#98a4b4" stroke-width="1"/></svg>
<div class="t" style="left:580px;top:142px;font-size:11.5px;letter-spacing:-0.15px;color:#111">S15 (MATERIAL)</div>
<svg class="a" style="left:670px;top:143px" width="9" height="9" viewBox="0 0 9 9"><path d="M1 1 L8 8 M8 1 L1 8" stroke="#8c8c8c" stroke-width="1.2"/></svg>
<svg class="a" style="left:686px;top:140px" width="127" height="16" viewBox="0 0 127 16"><path d="M0.5 16 V7 Q2 1 9 0.5 H123.0 Q126.5 0.5 126.5 4 V16" fill="#e3ecf7" stroke="#98a4b4" stroke-width="1"/></svg>
<div class="t" style="left:693px;top:142px;font-size:11.5px;letter-spacing:-0.15px;color:#111">B7 (PEMFC) - 方程</div>
<svg class="a" style="left:796px;top:143px" width="9" height="9" viewBox="0 0 9 9"><path d="M1 1 L8 8 M8 1 L1 8" stroke="#8c8c8c" stroke-width="1.2"/></svg>
<div class="a" style="left:816px;top:140px;width:14px;height:14px;background:linear-gradient(#fafcff,#dfe8f4);border:1px solid #d8d0c8;border-radius:3px"></div>
<svg class="a" style="left:817px;top:141px" width="13" height="13" viewBox="0 0 13 13"><path d="M6.5 1 V12 M1 6.5 H12" stroke="#333" stroke-width="1.8"/></svg>
<svg class="a" style="left:886px;top:143px" width="10" height="8" viewBox="0 0 11 9"><rect x="0" y="0" width="9" height="1.6" fill="#1e3a64"/><path d="M0.5 3 H8.5 L4.5 7Z" fill="#1e3a64"/></svg>
<svg class="a" style="left:905px;top:137px" width="252" height="20" viewBox="0 0 252 20"><path d="M0.5 19.5 L16 3 Q18 1 21 0.5 H248.0 Q250.5 0.5 250.5 3 V19.5" fill="#c3d6ee" stroke="#a0aec0" stroke-width="1"/></svg>
<div class="t" style="left:921px;top:142px;font-size:11.6px;color:#111;font-weight:bold;letter-spacing:-0.1px">B7 (PEMFC) - 变量 PlotMoleFlows - 图表</div>
<svg class="a" style="left:1142px;top:143px" width="9" height="9" viewBox="0 0 9 9"><path d="M1 1 L8 8 M8 1 L1 8" stroke="#8c8c8c" stroke-width="1.2"/></svg>
<div class="a" style="left:1162px;top:140px;width:13px;height:13px;background:linear-gradient(#fafcff,#dfe8f4);border:1px solid #c8d4e4;border-radius:2px"></div>
<svg class="a" style="left:1162px;top:140px" width="13" height="13" viewBox="0 0 13 13"><path d="M6.5 1 V12 M1 6.5 H12" stroke="#333" stroke-width="1.8"/></svg>
<svg class="a" style="left:1905px;top:143px" width="10" height="6" viewBox="0 0 10 6"><path d="M0 0 H10 L5 5Z" fill="#1e3a64"/></svg>
<div class="a" style="left:873px;top:163px;width:16px;height:693px;background:#f0f0f0"></div>
<div class="a" style="left:874px;top:235px;width:14px;height:548px;background:#cdcdcd"></div>
<svg class="a" style="left:876px;top:168px" width="9" height="7" viewBox="0 0 9 7"><path d="M1 5.5 L4.5 2 L8 5.5" fill="none" stroke="#555" stroke-width="1.8"/></svg>
<svg class="a" style="left:876px;top:843px" width="9" height="7" viewBox="0 0 9 7"><path d="M1 1.5 L4.5 5 L8 1.5" fill="none" stroke="#555" stroke-width="1.8"/></svg>
<div class="a" style="left:208px;top:856px;width:681px;height:16px;background:#f0f0f0"></div>
<div class="a" style="left:277px;top:857px;width:525px;height:14px;background:#cdcdcd"></div>
<svg class="a" style="left:213px;top:859px" width="7" height="9" viewBox="0 0 7 9"><path d="M5.5 1 L2 4.5 L5.5 8" fill="none" stroke="#555" stroke-width="1.8"/></svg>
<svg class="a" style="left:861px;top:859px" width="7" height="9" viewBox="0 0 7 9"><path d="M1.5 1 L5 4.5 L1.5 8" fill="none" stroke="#555" stroke-width="1.8"/></svg>
<svg class="a" style="left:842px;top:171px" width="21" height="21" viewBox="0 0 21 21"><circle cx="10.5" cy="10.5" r="9.8" fill="#2a82cc"/><circle cx="11.5" cy="5.5" r="1.2" fill="#fff"/><path d="M10 8.5 L9 15 Q9 16 11 15" fill="none" stroke="#fff" stroke-width="2"/></svg>
<svg class="a" style="left:909px;top:163px" width="1003" height="709" viewBox="909 163 1003 709"><text x="1380.5" y="185" font-family="Liberation Mono" font-weight="bold" font-size="15" fill="#000" xml:space="preserve"> ole Flo s</text><path d="M1381 175 H1389 V176.5 H1388.5 V183.5 H1389 V185 H1381 V183.5 H1381.5 V176.5 H1381Z" fill="#000"/><path d="M1453.5 178 H1462 V179.5 L1460.5 185 H1455 L1453.5 179.5Z" fill="#000"/><path d="M965.5 190 V822" stroke="#000" stroke-width="1.2"/><path d="M965 822.0 H970.5" stroke="#000" stroke-width="1.1"/><text x="960" y="825.0" font-family="Liberation Sans" font-size="11" text-anchor="end" fill="#000">0. 00</text><path d="M965 786.9 H970.5" stroke="#000" stroke-width="1.1"/><text x="960" y="789.9" font-family="Liberation Sans" font-size="11" text-anchor="end" fill="#000">0. 05</text><path d="M965 751.8 H970.5" stroke="#000" stroke-width="1.1"/><text x="960" y="754.8" font-family="Liberation Sans" font-size="11" text-anchor="end" fill="#000">0. 10</text><path d="M965 716.8 H970.5" stroke="#000" stroke-width="1.1"/><text x="960" y="719.8" font-family="Liberation Sans" font-size="11" text-anchor="end" fill="#000">0. 15</text><path d="M965 681.7 H970.5" stroke="#000" stroke-width="1.1"/><text x="960" y="684.7" font-family="Liberation Sans" font-size="11" text-anchor="end" fill="#000">0. 20</text><path d="M965 646.6 H970.5" stroke="#000" stroke-width="1.1"/><text x="960" y="649.6" font-family="Liberation Sans" font-size="11" text-anchor="end" fill="#000">0. 25</text><path d="M965 611.5 H970.5" stroke="#000" stroke-width="1.1"/><text x="960" y="614.5" font-family="Liberation Sans" font-size="11" text-anchor="end" fill="#000">0. 30</text><path d="M965 576.4 H970.5" stroke="#000" stroke-width="1.1"/><text x="960" y="579.4" font-family="Liberation Sans" font-size="11" text-anchor="end" fill="#000">0. 35</text><path d="M965 541.3 H970.5" stroke="#000" stroke-width="1.1"/><text x="960" y="544.3" font-family="Liberation Sans" font-size="11" text-anchor="end" fill="#000">0. 40</text><path d="M965 506.2 H970.5" stroke="#000" stroke-width="1.1"/><text x="960" y="509.2" font-family="Liberation Sans" font-size="11" text-anchor="end" fill="#000">0. 45</text><path d="M965 471.2 H970.5" stroke="#000" stroke-width="1.1"/><text x="960" y="474.2" font-family="Liberation Sans" font-size="11" text-anchor="end" fill="#000">0. 50</text><path d="M965 436.1 H970.5" stroke="#000" stroke-width="1.1"/><text x="960" y="439.1" font-family="Liberation Sans" font-size="11" text-anchor="end" fill="#000">0. 55</text><path d="M965 401.0 H970.5" stroke="#000" stroke-width="1.1"/><text x="960" y="404.0" font-family="Liberation Sans" font-size="11" text-anchor="end" fill="#000">0. 60</text><path d="M965 365.9 H970.5" stroke="#000" stroke-width="1.1"/><text x="960" y="368.9" font-family="Liberation Sans" font-size="11" text-anchor="end" fill="#000">0. 65</text><path d="M965 330.8 H970.5" stroke="#000" stroke-width="1.1"/><text x="960" y="333.8" font-family="Liberation Sans" font-size="11" text-anchor="end" fill="#000">0. 70</text><path d="M965 295.8 H970.5" stroke="#000" stroke-width="1.1"/><text x="960" y="298.8" font-family="Liberation Sans" font-size="11" text-anchor="end" fill="#000">0. 75</text><path d="M965 260.7 H970.5" stroke="#000" stroke-width="1.1"/><text x="960" y="263.7" font-family="Liberation Sans" font-size="11" text-anchor="end" fill="#000">0. 80</text><path d="M965 225.6 H970.5" stroke="#000" stroke-width="1.1"/><text x="960" y="228.6" font-family="Liberation Sans" font-size="11" text-anchor="end" fill="#000">0. 85</text><path d="M965 190.5 H970.5" stroke="#000" stroke-width="1.1"/><text x="960" y="193.5" font-family="Liberation Sans" font-size="11" text-anchor="end" fill="#000">0. 90</text><path d="M965.0 818 V821" stroke="#000" stroke-width="1.1"/><path d="M983.5 818 V821" stroke="#000" stroke-width="1.1"/><path d="M1002.0 818 V821" stroke="#000" stroke-width="1.1"/><path d="M1020.4 818 V821" stroke="#000" stroke-width="1.1"/><path d="M1038.9 818 V821" stroke="#000" stroke-width="1.1"/><path d="M1057.4 818 V821" stroke="#000" stroke-width="1.1"/><path d="M1075.9 818 V821" stroke="#000" stroke-width="1.1"/><path d="M1094.4 818 V821" stroke="#000" stroke-width="1.1"/><path d="M1112.8 818 V821" stroke="#000" stroke-width="1.1"/><path d="M1131.3 818 V821" stroke="#000" stroke-width="1.1"/><path d="M1149.8 818 V821" stroke="#000" stroke-width="1.1"/><path d="M1168.3 818 V821" stroke="#000" stroke-width="1.1"/><path d="M1186.8 818 V821" stroke="#000" stroke-width="1.1"/><path d="M1205.2 818 V821" stroke="#000" stroke-width="1.1"/><path d="M1223.7 818 V821" stroke="#000" stroke-width="1.1"/><path d="M1242.2 818 V821" stroke="#000" stroke-width="1.1"/><path d="M1260.7 818 V821" stroke="#000" stroke-width="1.1"/><path d="M1279.2 818 V821" stroke="#000" stroke-width="1.1"/><path d="M1297.6 818 V821" stroke="#000" stroke-width="1.1"/><path d="M1316.1 818 V821" stroke="#000" stroke-width="1.1"/><path d="M1334.6 818 V821" stroke="#000" stroke-width="1.1"/><path d="M1353.1 818 V821" stroke="#000" stroke-width="1.1"/><path d="M1371.6 818 V821" stroke="#000" stroke-width="1.1"/><path d="M1390.0 818 V821" stroke="#000" stroke-width="1.1"/><path d="M1408.5 818 V821" stroke="#000" stroke-width="1.1"/><path d="M1427.0 818 V821" stroke="#000" stroke-width="1.1"/><path d="M1445.5 818 V821" stroke="#000" stroke-width="1.1"/><path d="M1464.0 818 V821" stroke="#000" stroke-width="1.1"/><path d="M1482.4 818 V821" stroke="#000" stroke-width="1.1"/><path d="M1500.9 818 V821" stroke="#000" stroke-width="1.1"/><path d="M1519.4 818 V821" stroke="#000" stroke-width="1.1"/><path d="M1537.9 818 V821" stroke="#000" stroke-width="1.1"/><path d="M1556.4 818 V821" stroke="#000" stroke-width="1.1"/><path d="M1574.8 818 V821" stroke="#000" stroke-width="1.1"/><path d="M1593.3 818 V821" stroke="#000" stroke-width="1.1"/><path d="M1611.8 818 V821" stroke="#000" stroke-width="1.1"/><path d="M1630.3 818 V821" stroke="#000" stroke-width="1.1"/><path d="M1648.8 818 V821" stroke="#000" stroke-width="1.1"/><path d="M1667.2 818 V821" stroke="#000" stroke-width="1.1"/><path d="M1685.7 818 V821" stroke="#000" stroke-width="1.1"/><path d="M1704.2 818 V821" stroke="#000" stroke-width="1.1"/><path d="M1722.7 818 V821" stroke="#000" stroke-width="1.1"/><path d="M1741.2 818 V821" stroke="#000" stroke-width="1.1"/><path d="M1759.6 818 V821" stroke="#000" stroke-width="1.1"/><path d="M1778.1 818 V821" stroke="#000" stroke-width="1.1"/><path d="M1796.6 818 V821" stroke="#000" stroke-width="1.1"/><path d="M1815.1 818 V821" stroke="#000" stroke-width="1.1"/><path d="M1833.6 818 V821" stroke="#000" stroke-width="1.1"/><path d="M1852.0 818 V821" stroke="#000" stroke-width="1.1"/><path d="M1870.5 818 V821" stroke="#000" stroke-width="1.1"/><path d="M1889.0 818 V821" stroke="#000" stroke-width="1.1"/><text x="965.0" y="837" font-family="Liberation Sans" font-size="11" text-anchor="middle" fill="#000">0. 00</text><text x="1002.0" y="837" font-family="Liberation Sans" font-size="11" text-anchor="middle" fill="#000">0. 02</text><text x="1038.9" y="837" font-family="Liberation Sans" font-size="11" text-anchor="middle" fill="#000">0. 04</text><text x="1075.9" y="837" font-family="Liberation Sans" font-size="11" text-anchor="middle" fill="#000">0. 06</text><text x="1112.8" y="837" font-family="Liberation Sans" font-size="11" text-anchor="middle" fill="#000">0. 08</text><text x="1149.8" y="837" font-family="Liberation Sans" font-size="11" text-anchor="middle" fill="#000">0. 10</text><text x="1186.8" y="837" font-family="Liberation Sans" font-size="11" text-anchor="middle" fill="#000">0. 12</text><text x="1223.7" y="837" font-family="Liberation Sans" font-size="11" text-anchor="middle" fill="#000">0. 14</text><text x="1260.7" y="837" font-family="Liberation Sans" font-size="11" text-anchor="middle" fill="#000">0. 16</text><text x="1297.6" y="837" font-family="Liberation Sans" font-size="11" text-anchor="middle" fill="#000">0. 18</text><text x="1334.6" y="837" font-family="Liberation Sans" font-size="11" text-anchor="middle" fill="#000">0. 20</text><text x="1371.6" y="837" font-family="Liberation Sans" font-size="11" text-anchor="middle" fill="#000">0. 22</text><text x="1408.5" y="837" font-family="Liberation Sans" font-size="11" text-anchor="middle" fill="#000">0. 24</text><text x="1445.5" y="837" font-family="Liberation Sans" font-size="11" text-anchor="middle" fill="#000">0. 26</text><text x="1482.4" y="837" font-family="Liberation Sans" font-size="11" text-anchor="middle" fill="#000">0. 28</text><text x="1519.4" y="837" font-family="Liberation Sans" font-size="11" text-anchor="middle" fill="#000">0. 30</text><text x="1556.4" y="837" font-family="Liberation Sans" font-size="11" text-anchor="middle" fill="#000">0. 32</text><text x="1593.3" y="837" font-family="Liberation Sans" font-size="11" text-anchor="middle" fill="#000">0. 34</text><text x="1630.3" y="837" font-family="Liberation Sans" font-size="11" text-anchor="middle" fill="#000">0. 36</text><text x="1667.2" y="837" font-family="Liberation Sans" font-size="11" text-anchor="middle" fill="#000">0. 38</text><text x="1704.2" y="837" font-family="Liberation Sans" font-size="11" text-anchor="middle" fill="#000">0. 40</text><text x="1741.2" y="837" font-family="Liberation Sans" font-size="11" text-anchor="middle" fill="#000">0. 42</text><text x="1778.1" y="837" font-family="Liberation Sans" font-size="11" text-anchor="middle" fill="#000">0. 44</text><text x="1815.1" y="837" font-family="Liberation Sans" font-size="11" text-anchor="middle" fill="#000">0. 46</text><text x="1852.0" y="837" font-family="Liberation Sans" font-size="11" text-anchor="middle" fill="#000">0. 48</text><text x="1889.0" y="837" font-family="Liberation Sans" font-size="11" text-anchor="middle" fill="#000">0. 50</text><text x="1425" y="857" font-family="Liberation Sans" font-weight="bold" font-size="12.5" text-anchor="middle" fill="#000">Distance?&#160;&#160;&#160;METER)</text><text x="935" y="505.5" font-family="Liberation Sans" font-weight="bold" font-size="14.5" text-anchor="middle" fill="#000" transform="rotate(-90 935 505.5)">Mole flows (mol/hr)</text><polyline points="965.0,822.0 988.1,822.0 1011.2,822.0 1034.3,822.0 1057.4,822.0 1080.5,822.0 1103.6,822.0 1126.7,822.0 1149.8,822.0 1172.9,822.0 1196.0,822.0 1219.1,822.0 1242.2,822.0 1265.3,822.0 1288.4,822.0 1311.5,822.0 1334.6,822.0 1357.7,822.0 1380.8,822.0 1403.9,822.0 1427.0,822.0 1450.1,822.0 1473.2,822.0 1496.3,822.0 1519.4,822.0 1542.5,822.0 1565.6,822.0 1588.7,822.0 1611.8,822.0 1634.9,822.0 1658.0,822.0 1681.1,822.0 1704.2,822.0 1727.3,822.0 1750.4,822.0 1773.5,822.0 1796.6,822.0 1819.7,822.0 1842.8,822.0 1865.9,822.0 1889.0,822.0" fill="none" stroke="#808080" stroke-width="2.4"/><path d="M965 821 H1889" stroke="#b060b0" stroke-width="1"/><path d="M965.0 818.0 l4.5 4.5 l-4.5 4.5 l-4.5 -4.5Z" fill="#e040a0"/><path d="M988.1 818.0 l4.5 4.5 l-4.5 4.5 l-4.5 -4.5Z" fill="#e040a0"/><path d="M1011.2 818.0 l4.5 4.5 l-4.5 4.5 l-4.5 -4.5Z" fill="#e040a0"/><path d="M1034.3 818.0 l4.5 4.5 l-4.5 4.5 l-4.5 -4.5Z" fill="#e040a0"/><path d="M1057.4 818.0 l4.5 4.5 l-4.5 4.5 l-4.5 -4.5Z" fill="#e040a0"/><path d="M1080.5 818.0 l4.5 4.5 l-4.5 4.5 l-4.5 -4.5Z" fill="#e040a0"/><path d="M1103.6 818.0 l4.5 4.5 l-4.5 4.5 l-4.5 -4.5Z" fill="#e040a0"/><path d="M1126.7 818.0 l4.5 4.5 l-4.5 4.5 l-4.5 -4.5Z" fill="#e040a0"/><path d="M1149.8 818.0 l4.5 4.5 l-4.5 4.5 l-4.5 -4.5Z" fill="#e040a0"/><path d="M1172.9 818.0 l4.5 4.5 l-4.5 4.5 l-4.5 -4.5Z" fill="#e040a0"/><path d="M1196.0 818.0 l4.5 4.5 l-4.5 4.5 l-4.5 -4.5Z" fill="#e040a0"/><path d="M1219.1 818.0 l4.5 4.5 l-4.5 4.5 l-4.5 -4.5Z" fill="#e040a0"/><path d="M1242.2 818.0 l4.5 4.5 l-4.5 4.5 l-4.5 -4.5Z" fill="#e040a0"/><path d="M1265.3 818.0 l4.5 4.5 l-4.5 4.5 l-4.5 -4.5Z" fill="#e040a0"/><path d="M1288.4 818.0 l4.5 4.5 l-4.5 4.5 l-4.5 -4.5Z" fill="#e040a0"/><path d="M1311.5 818.0 l4.5 4.5 l-4.5 4.5 l-4.5 -4.5Z" fill="#e040a0"/><path d="M1334.6 818.0 l4.5 4.5 l-4.5 4.5 l-4.5 -4.5Z" fill="#e040a0"/><path d="M1357.7 818.0 l4.5 4.5 l-4.5 4.5 l-4.5 -4.5Z" fill="#e040a0"/><path d="M1380.8 818.0 l4.5 4.5 l-4.5 4.5 l-4.5 -4.5Z" fill="#e040a0"/><path d="M1403.9 818.0 l4.5 4.5 l-4.5 4.5 l-4.5 -4.5Z" fill="#e040a0"/><path d="M1427.0 818.0 l4.5 4.5 l-4.5 4.5 l-4.5 -4.5Z" fill="#e040a0"/><path d="M1450.1 818.0 l4.5 4.5 l-4.5 4.5 l-4.5 -4.5Z" fill="#e040a0"/><path d="M1473.2 818.0 l4.5 4.5 l-4.5 4.5 l-4.5 -4.5Z" fill="#e040a0"/><path d="M1496.3 818.0 l4.5 4.5 l-4.5 4.5 l-4.5 -4.5Z" fill="#e040a0"/><path d="M1519.4 818.0 l4.5 4.5 l-4.5 4.5 l-4.5 -4.5Z" fill="#e040a0"/><path d="M1542.5 818.0 l4.5 4.5 l-4.5 4.5 l-4.5 -4.5Z" fill="#e040a0"/><path d="M1565.6 818.0 l4.5 4.5 l-4.5 4.5 l-4.5 -4.5Z" fill="#e040a0"/><path d="M1588.7 818.0 l4.5 4.5 l-4.5 4.5 l-4.5 -4.5Z" fill="#e040a0"/><path d="M1611.8 818.0 l4.5 4.5 l-4.5 4.5 l-4.5 -4.5Z" fill="#e040a0"/><path d="M1634.9 818.0 l4.5 4.5 l-4.5 4.5 l-4.5 -4.5Z" fill="#e040a0"/><path d="M1658.0 818.0 l4.5 4.5 l-4.5 4.5 l-4.5 -4.5Z" fill="#e040a0"/><path d="M1681.1 818.0 l4.5 4.5 l-4.5 4.5 l-4.5 -4.5Z" fill="#e040a0"/><path d="M1704.2 818.0 l4.5 4.5 l-4.5 4.5 l-4.5 -4.5Z" fill="#e040a0"/><path d="M1727.3 818.0 l4.5 4.5 l-4.5 4.5 l-4.5 -4.5Z" fill="#e040a0"/><path d="M1750.4 818.0 l4.5 4.5 l-4.5 4.5 l-4.5 -4.5Z" fill="#e040a0"/><path d="M1773.5 818.0 l4.5 4.5 l-4.5 4.5 l-4.5 -4.5Z" fill="#e040a0"/><path d="M1796.6 818.0 l4.5 4.5 l-4.5 4.5 l-4.5 -4.5Z" fill="#e040a0"/><path d="M1819.7 818.0 l4.5 4.5 l-4.5 4.5 l-4.5 -4.5Z" fill="#e040a0"/><path d="M1842.8 818.0 l4.5 4.5 l-4.5 4.5 l-4.5 -4.5Z" fill="#e040a0"/><path d="M1865.9 818.0 l4.5 4.5 l-4.5 4.5 l-4.5 -4.5Z" fill="#e040a0"/><path d="M1889.0 818.0 l4.5 4.5 l-4.5 4.5 l-4.5 -4.5Z" fill="#e040a0"/><path d="M960.0 820.5 h10 l-5 7Z" fill="#808080"/><path d="M983.1 820.5 h10 l-5 7Z" fill="#808080"/><path d="M1006.2 820.5 h10 l-5 7Z" fill="#808080"/><path d="M1029.3 820.5 h10 l-5 7Z" fill="#808080"/><path d="M1052.4 820.5 h10 l-5 7Z" fill="#808080"/><path d="M1075.5 820.5 h10 l-5 7Z" fill="#808080"/><path d="M1098.6 820.5 h10 l-5 7Z" fill="#808080"/><path d="M1121.7 820.5 h10 l-5 7Z" fill="#808080"/><path d="M1144.8 820.5 h10 l-5 7Z" fill="#808080"/><path d="M1167.9 820.5 h10 l-5 7Z" fill="#808080"/><path d="M1191.0 820.5 h10 l-5 7Z" fill="#808080"/><path d="M1214.1 820.5 h10 l-5 7Z" fill="#808080"/><path d="M1237.2 820.5 h10 l-5 7Z" fill="#808080"/><path d="M1260.3 820.5 h10 l-5 7Z" fill="#808080"/><path d="M1283.4 820.5 h10 l-5 7Z" fill="#808080"/><path d="M1306.5 820.5 h10 l-5 7Z" fill="#808080"/><path d="M1329.6 820.5 h10 l-5 7Z" fill="#808080"/><path d="M1352.7 820.5 h10 l-5 7Z" fill="#808080"/><path d="M1375.8 820.5 h10 l-5 7Z" fill="#808080"/><path d="M1398.9 820.5 h10 l-5 7Z" fill="#808080"/><path d="M1422.0 820.5 h10 l-5 7Z" fill="#808080"/><path d="M1445.1 820.5 h10 l-5 7Z" fill="#808080"/><path d="M1468.2 820.5 h10 l-5 7Z" fill="#808080"/><path d="M1491.3 820.5 h10 l-5 7Z" fill="#808080"/><path d="M1514.4 820.5 h10 l-5 7Z" fill="#808080"/><path d="M1537.5 820.5 h10 l-5 7Z" fill="#808080"/><path d="M1560.6 820.5 h10 l-5 7Z" fill="#808080"/><path d="M1583.7 820.5 h10 l-5 7Z" fill="#808080"/><path d="M1606.8 820.5 h10 l-5 7Z" fill="#808080"/><path d="M1629.9 820.5 h10 l-5 7Z" fill="#808080"/><path d="M1653.0 820.5 h10 l-5 7Z" fill="#808080"/><path d="M1676.1 820.5 h10 l-5 7Z" fill="#808080"/><path d="M1699.2 820.5 h10 l-5 7Z" fill="#808080"/><path d="M1722.3 820.5 h10 l-5 7Z" fill="#808080"/><path d="M1745.4 820.5 h10 l-5 7Z" fill="#808080"/><path d="M1768.5 820.5 h10 l-5 7Z" fill="#808080"/><path d="M1791.6 820.5 h10 l-5 7Z" fill="#808080"/><path d="M1814.7 820.5 h10 l-5 7Z" fill="#808080"/><path d="M1837.8 820.5 h10 l-5 7Z" fill="#808080"/><path d="M1860.9 820.5 h10 l-5 7Z" fill="#808080"/><path d="M1884.0 820.5 h10 l-5 7Z" fill="#808080"/><polyline points="965.0,822.0 988.1,822.0 1011.2,819.6 1034.3,819.0 1057.4,817.5 1080.5,816.0 1103.6,814.4 1126.7,812.9 1149.8,811.4 1172.9,809.9 1196.0,808.4 1219.1,806.9 1242.2,805.4 1265.3,803.9 1288.4,802.4 1311.5,800.8 1334.6,799.3 1357.7,797.8 1380.8,796.3 1403.9,794.8 1427.0,793.3 1450.1,791.8 1473.2,790.3 1496.3,788.8 1519.4,787.2 1542.5,785.7 1565.6,784.2 1588.7,782.7 1611.8,781.2 1634.9,779.7 1658.0,778.2 1681.1,776.7 1704.2,775.2 1727.3,773.6 1750.4,772.1 1773.5,770.6 1796.6,769.1 1819.7,767.6 1842.8,766.1 1865.9,764.6 1889.0,763.1" fill="none" stroke="#1a9a9a" stroke-width="2"/><circle cx="965.0" cy="822.0" r="3.6" fill="#fff" stroke="#1a9a9a" stroke-width="1.8"/><circle cx="988.1" cy="822.0" r="3.6" fill="#fff" stroke="#1a9a9a" stroke-width="1.8"/><circle cx="1011.2" cy="819.6" r="3.6" fill="#fff" stroke="#1a9a9a" stroke-width="1.8"/><circle cx="1034.3" cy="819.0" r="3.6" fill="#fff" stroke="#1a9a9a" stroke-width="1.8"/><circle cx="1057.4" cy="817.5" r="3.6" fill="#fff" stroke="#1a9a9a" stroke-width="1.8"/><circle cx="1080.5" cy="816.0" r="3.6" fill="#fff" stroke="#1a9a9a" stroke-width="1.8"/><circle cx="1103.6" cy="814.4" r="3.6" fill="#fff" stroke="#1a9a9a" stroke-width="1.8"/><circle cx="1126.7" cy="812.9" r="3.6" fill="#fff" stroke="#1a9a9a" stroke-width="1.8"/><circle cx="1149.8" cy="811.4" r="3.6" fill="#fff" stroke="#1a9a9a" stroke-width="1.8"/><circle cx="1172.9" cy="809.9" r="3.6" fill="#fff" stroke="#1a9a9a" stroke-width="1.8"/><circle cx="1196.0" cy="808.4" r="3.6" fill="#fff" stroke="#1a9a9a" stroke-width="1.8"/><circle cx="1219.1" cy="806.9" r="3.6" fill="#fff" stroke="#1a9a9a" stroke-width="1.8"/><circle cx="1242.2" cy="805.4" r="3.6" fill="#fff" stroke="#1a9a9a" stroke-width="1.8"/><circle cx="1265.3" cy="803.9" r="3.6" fill="#fff" stroke="#1a9a9a" stroke-width="1.8"/><circle cx="1288.4" cy="802.4" r="3.6" fill="#fff" stroke="#1a9a9a" stroke-width="1.8"/><circle cx="1311.5" cy="800.8" r="3.6" fill="#fff" stroke="#1a9a9a" stroke-width="1.8"/><circle cx="1334.6" cy="799.3" r="3.6" fill="#fff" stroke="#1a9a9a" stroke-width="1.8"/><circle cx="1357.7" cy="797.8" r="3.6" fill="#fff" stroke="#1a9a9a" stroke-width="1.8"/><circle cx="1380.8" cy="796.3" r="3.6" fill="#fff" stroke="#1a9a9a" stroke-width="1.8"/><circle cx="1403.9" cy="794.8" r="3.6" fill="#fff" stroke="#1a9a9a" stroke-width="1.8"/><circle cx="1427.0" cy="793.3" r="3.6" fill="#fff" stroke="#1a9a9a" stroke-width="1.8"/><circle cx="1450.1" cy="791.8" r="3.6" fill="#fff" stroke="#1a9a9a" stroke-width="1.8"/><circle cx="1473.2" cy="790.3" r="3.6" fill="#fff" stroke="#1a9a9a" stroke-width="1.8"/><circle cx="1496.3" cy="788.8" r="3.6" fill="#fff" stroke="#1a9a9a" stroke-width="1.8"/><circle cx="1519.4" cy="787.2" r="3.6" fill="#fff" stroke="#1a9a9a" stroke-width="1.8"/><circle cx="1542.5" cy="785.7" r="3.6" fill="#fff" stroke="#1a9a9a" stroke-width="1.8"/><circle cx="1565.6" cy="784.2" r="3.6" fill="#fff" stroke="#1a9a9a" stroke-width="1.8"/><circle cx="1588.7" cy="782.7" r="3.6" fill="#fff" stroke="#1a9a9a" stroke-width="1.8"/><circle cx="1611.8" cy="781.2" r="3.6" fill="#fff" stroke="#1a9a9a" stroke-width="1.8"/><circle cx="1634.9" cy="779.7" r="3.6" fill="#fff" stroke="#1a9a9a" stroke-width="1.8"/><circle cx="1658.0" cy="778.2" r="3.6" fill="#fff" stroke="#1a9a9a" stroke-width="1.8"/><circle cx="1681.1" cy="776.7" r="3.6" fill="#fff" stroke="#1a9a9a" stroke-width="1.8"/><circle cx="1704.2" cy="775.2" r="3.6" fill="#fff" stroke="#1a9a9a" stroke-width="1.8"/><circle cx="1727.3" cy="773.6" r="3.6" fill="#fff" stroke="#1a9a9a" stroke-width="1.8"/><circle cx="1750.4" cy="772.1" r="3.6" fill="#fff" stroke="#1a9a9a" stroke-width="1.8"/><circle cx="1773.5" cy="770.6" r="3.6" fill="#fff" stroke="#1a9a9a" stroke-width="1.8"/><circle cx="1796.6" cy="769.1" r="3.6" fill="#fff" stroke="#1a9a9a" stroke-width="1.8"/><circle cx="1819.7" cy="767.6" r="3.6" fill="#fff" stroke="#1a9a9a" stroke-width="1.8"/><circle cx="1842.8" cy="766.1" r="3.6" fill="#fff" stroke="#1a9a9a" stroke-width="1.8"/><circle cx="1865.9" cy="764.6" r="3.6" fill="#fff" stroke="#1a9a9a" stroke-width="1.8"/><circle cx="1889.0" cy="763.1" r="3.6" fill="#fff" stroke="#1a9a9a" stroke-width="1.8"/><polyline points="965.0,510.0 988.1,510.8 1011.2,511.5 1034.3,512.2 1057.4,512.9 1080.5,513.7 1103.6,514.4 1126.7,515.1 1149.8,515.8 1172.9,516.6 1196.0,517.3 1219.1,518.0 1242.2,518.7 1265.3,519.5 1288.4,520.2 1311.5,520.9 1334.6,521.6 1357.7,522.4 1380.8,523.1 1403.9,523.8 1427.0,524.5 1450.1,525.3 1473.2,526.0 1496.3,526.7 1519.4,527.4 1542.5,528.2 1565.6,528.9 1588.7,529.6 1611.8,530.3 1634.9,531.0 1658.0,531.8 1681.1,532.5 1704.2,533.2 1727.3,533.9 1750.4,534.7 1773.5,535.4 1796.6,536.1 1819.7,536.8 1842.8,537.6 1865.9,538.3 1889.0,539.0" fill="none" stroke="#008000" stroke-width="2"/><rect x="961.0" y="506.0" width="8" height="8" fill="#008000"/><rect x="984.1" y="506.8" width="8" height="8" fill="#008000"/><rect x="1007.2" y="507.5" width="8" height="8" fill="#008000"/><rect x="1030.3" y="508.2" width="8" height="8" fill="#008000"/><rect x="1053.4" y="508.9" width="8" height="8" fill="#008000"/><rect x="1076.5" y="509.7" width="8" height="8" fill="#008000"/><rect x="1099.6" y="510.4" width="8" height="8" fill="#008000"/><rect x="1122.7" y="511.1" width="8" height="8" fill="#008000"/><rect x="1145.8" y="511.8" width="8" height="8" fill="#008000"/><rect x="1168.9" y="512.6" width="8" height="8" fill="#008000"/><rect x="1192.0" y="513.3" width="8" height="8" fill="#008000"/><rect x="1215.1" y="514.0" width="8" height="8" fill="#008000"/><rect x="1238.2" y="514.7" width="8" height="8" fill="#008000"/><rect x="1261.3" y="515.5" width="8" height="8" fill="#008000"/><rect x="1284.4" y="516.2" width="8" height="8" fill="#008000"/><rect x="1307.5" y="516.9" width="8" height="8" fill="#008000"/><rect x="1330.6" y="517.6" width="8" height="8" fill="#008000"/><rect x="1353.7" y="518.4" width="8" height="8" fill="#008000"/><rect x="1376.8" y="519.1" width="8" height="8" fill="#008000"/><rect x="1399.9" y="519.8" width="8" height="8" fill="#008000"/><rect x="1423.0" y="520.5" width="8" height="8" fill="#008000"/><rect x="1446.1" y="521.3" width="8" height="8" fill="#008000"/><rect x="1469.2" y="522.0" width="8" height="8" fill="#008000"/><rect x="1492.3" y="522.7" width="8" height="8" fill="#008000"/><rect x="1515.4" y="523.4" width="8" height="8" fill="#008000"/><rect x="1538.5" y="524.2" width="8" height="8" fill="#008000"/><rect x="1561.6" y="524.9" width="8" height="8" fill="#008000"/><rect x="1584.7" y="525.6" width="8" height="8" fill="#008000"/><rect x="1607.8" y="526.3" width="8" height="8" fill="#008000"/><rect x="1630.9" y="527.0" width="8" height="8" fill="#008000"/><rect x="1654.0" y="527.8" width="8" height="8" fill="#008000"/><rect x="1677.1" y="528.5" width="8" height="8" fill="#008000"/><rect x="1700.2" y="529.2" width="8" height="8" fill="#008000"/><rect x="1723.3" y="529.9" width="8" height="8" fill="#008000"/><rect x="1746.4" y="530.7" width="8" height="8" fill="#008000"/><rect x="1769.5" y="531.4" width="8" height="8" fill="#008000"/><rect x="1792.6" y="532.1" width="8" height="8" fill="#008000"/><rect x="1815.7" y="532.8" width="8" height="8" fill="#008000"/><rect x="1838.8" y="533.6" width="8" height="8" fill="#008000"/><rect x="1861.9" y="534.3" width="8" height="8" fill="#008000"/><rect x="1885.0" y="535.0" width="8" height="8" fill="#008000"/><polyline points="965.0,198.9 988.1,199.8 1011.2,201.8 1034.3,202.7 1057.4,204.7 1080.5,205.6 1103.6,207.7 1126.7,208.6 1149.8,210.6 1172.9,211.5 1196.0,213.5 1219.1,214.4 1242.2,216.4 1265.3,217.3 1288.4,219.3 1311.5,220.2 1334.6,222.2 1357.7,223.1 1380.8,225.1 1403.9,226.0 1427.0,228.0 1450.1,228.9 1473.2,231.0 1496.3,231.8 1519.4,233.9 1542.5,234.8 1565.6,236.8 1588.7,237.7 1611.8,239.7 1634.9,240.6 1658.0,242.6 1681.1,243.5 1704.2,245.5 1727.3,246.4 1750.4,248.4 1773.5,249.3 1796.6,251.3 1819.7,252.2 1842.8,254.2 1865.9,255.1 1889.0,257.2" fill="none" stroke="#3a3ac0" stroke-width="2"/><circle cx="965.0" cy="198.9" r="4.2" fill="#3a3ac0"/><circle cx="988.1" cy="199.8" r="4.2" fill="#3a3ac0"/><circle cx="1011.2" cy="201.8" r="4.2" fill="#3a3ac0"/><circle cx="1034.3" cy="202.7" r="4.2" fill="#3a3ac0"/><circle cx="1057.4" cy="204.7" r="4.2" fill="#3a3ac0"/><circle cx="1080.5" cy="205.6" r="4.2" fill="#3a3ac0"/><circle cx="1103.6" cy="207.7" r="4.2" fill="#3a3ac0"/><circle cx="1126.7" cy="208.6" r="4.2" fill="#3a3ac0"/><circle cx="1149.8" cy="210.6" r="4.2" fill="#3a3ac0"/><circle cx="1172.9" cy="211.5" r="4.2" fill="#3a3ac0"/><circle cx="1196.0" cy="213.5" r="4.2" fill="#3a3ac0"/><circle cx="1219.1" cy="214.4" r="4.2" fill="#3a3ac0"/><circle cx="1242.2" cy="216.4" r="4.2" fill="#3a3ac0"/><circle cx="1265.3" cy="217.3" r="4.2" fill="#3a3ac0"/><circle cx="1288.4" cy="219.3" r="4.2" fill="#3a3ac0"/><circle cx="1311.5" cy="220.2" r="4.2" fill="#3a3ac0"/><circle cx="1334.6" cy="222.2" r="4.2" fill="#3a3ac0"/><circle cx="1357.7" cy="223.1" r="4.2" fill="#3a3ac0"/><circle cx="1380.8" cy="225.1" r="4.2" fill="#3a3ac0"/><circle cx="1403.9" cy="226.0" r="4.2" fill="#3a3ac0"/><circle cx="1427.0" cy="228.0" r="4.2" fill="#3a3ac0"/><circle cx="1450.1" cy="228.9" r="4.2" fill="#3a3ac0"/><circle cx="1473.2" cy="231.0" r="4.2" fill="#3a3ac0"/><circle cx="1496.3" cy="231.8" r="4.2" fill="#3a3ac0"/><circle cx="1519.4" cy="233.9" r="4.2" fill="#3a3ac0"/><circle cx="1542.5" cy="234.8" r="4.2" fill="#3a3ac0"/><circle cx="1565.6" cy="236.8" r="4.2" fill="#3a3ac0"/><circle cx="1588.7" cy="237.7" r="4.2" fill="#3a3ac0"/><circle cx="1611.8" cy="239.7" r="4.2" fill="#3a3ac0"/><circle cx="1634.9" cy="240.6" r="4.2" fill="#3a3ac0"/><circle cx="1658.0" cy="242.6" r="4.2" fill="#3a3ac0"/><circle cx="1681.1" cy="243.5" r="4.2" fill="#3a3ac0"/><circle cx="1704.2" cy="245.5" r="4.2" fill="#3a3ac0"/><circle cx="1727.3" cy="246.4" r="4.2" fill="#3a3ac0"/><circle cx="1750.4" cy="248.4" r="4.2" fill="#3a3ac0"/><circle cx="1773.5" cy="249.3" r="4.2" fill="#3a3ac0"/><circle cx="1796.6" cy="251.3" r="4.2" fill="#3a3ac0"/><circle cx="1819.7" cy="252.2" r="4.2" fill="#3a3ac0"/><circle cx="1842.8" cy="254.2" r="4.2" fill="#3a3ac0"/><circle cx="1865.9" cy="255.1" r="4.2" fill="#3a3ac0"/><circle cx="1889.0" cy="257.2" r="4.2" fill="#3a3ac0"/><rect x="1729.5" y="294.5" width="133" height="104" fill="#fff" stroke="#000" stroke-width="1.2"/><path d="M1736 306.7 H1755" stroke="#3a3ac0" stroke-width="1.6"/><circle cx="1745.5" cy="306.7" r="4.3" fill="#3a3ac0"/><text x="1760" y="310.7" font-family="Liberation Sans" font-size="10.5" fill="#3a3ac0">Anode H2</text><path d="M1736 322.9 H1755" stroke="#008000" stroke-width="1.6"/><rect x="1741.0" y="318.4" width="9" height="9" fill="#008000"/><text x="1760" y="326.9" font-family="Liberation Sans" font-size="10.5" fill="#008000">Cathode O2</text><path d="M1736 339.1 H1755" stroke="#e8408a" stroke-width="1.6"/><path d="M1745.5 334.1 l5 5 l-5 5 l-5 -5Z" fill="#e8408a"/><text x="1760" y="343.1" font-family="Liberation Sans" font-size="10.5" fill="#e8408a">Anode Liq H2O</text><path d="M1736 355.3 H1755" stroke="#b040c0" stroke-width="1.6"/><path d="M1745.5 350.3 l5 8 h-10Z" fill="#b040c0"/><text x="1760" y="359.3" font-family="Liberation Sans" font-size="10.5" fill="#b040c0">Cathode Liq H2O</text><path d="M1736 371.5 H1755" stroke="#808080" stroke-width="1.6"/><path d="M1740.5 368.5 h10 l-5 6Z" fill="#808080"/><text x="1760" y="375.5" font-family="Liberation Sans" font-size="10.5" fill="#808080">Anode Vap H20</text><path d="M1736 387.7 H1755" stroke="#1a9a9a" stroke-width="1.6"/><circle cx="1745.5" cy="387.7" r="3.5" fill="#fff" stroke="#1a9a9a" stroke-width="1.6"/><text x="1760" y="391.7" font-family="Liberation Sans" font-size="10.5" fill="#1a9a9a">Cathode Vap H20</text><text x="1694" y="715" font-family="Liberation Sans" font-weight="bold" font-size="19.5" fill="#000">WX:</text><text x="1747" y="715" font-family="Liberation Sans" font-weight="bold" font-size="19.5" letter-spacing="0.9" fill="#000">13820983122</text></svg>
<svg class="a" style="left:208px;top:163px" width="665" height="693" viewBox="208 163 665 693"><defs><linearGradient id="cyl" x1="0" y1="0" x2="1" y2="0"><stop offset="0" stop-color="#6e6e5e"/><stop offset="0.35" stop-color="#fdfde8"/><stop offset="0.6" stop-color="#d8d8c0"/><stop offset="1" stop-color="#5a5a4a"/></linearGradient><linearGradient id="cylb" x1="0" y1="0" x2="0" y2="1"><stop offset="0" stop-color="#fafae8"/><stop offset="1" stop-color="#6a6a5a"/></linearGradient></defs><path d="M576.5 462.5 V348.5 H692" stroke="#000" stroke-width="1.3" fill="none"/><path d="M691.0 348.5 l4 -4 v2.5 h3 v3 h-3 v2.5Z" fill="#fff" stroke="#000" stroke-width="1.1"/><path d="M576.5 486.5 V550" stroke="#000" stroke-width="1.3" fill="none"/><rect x="556.5" y="462.5" width="40" height="24" fill="#fff" stroke="#000" stroke-width="1.3"/><text x="576.5" y="480.5" font-family="Liberation Sans" font-style="italic" font-size="14" text-anchor="middle" fill="#000">S17</text><path d="M446 501.5 H451.5 M491.5 501.5 H553.5 V550" stroke="#000" stroke-width="1.3" fill="none"/><path d="M446.0 501.5 l-4 -4 v2.5 h-3 v3 h3 v2.5Z" fill="#fff" stroke="#000" stroke-width="1.1"/><rect x="451.5" y="489.5" width="40" height="24" fill="#fff" stroke="#000" stroke-width="1.3"/><text x="471.5" y="507.5" font-family="Liberation Sans" font-style="italic" font-size="14" text-anchor="middle" fill="#000">S15</text><path d="M548.5 541.5 L553.5 551.5 L558.5 541.5" fill="none" stroke="#000" stroke-width="1.6"/><path d="M550.5 545 L553.5 551.5 L556.5 545Z" fill="#000"/><path d="M571.5 541.5 L576.5 551.5 L581.5 541.5" fill="none" stroke="#000" stroke-width="1.6"/><path d="M573.5 545 L576.5 551.5 L579.5 545Z" fill="#000"/><rect x="562" y="557" width="5" height="48" fill="#000"/><path d="M545.5 560 Q545.5 552 553.8 552 Q562 552 562 560 V605 H545.5Z" fill="url(#cyl)"/><path d="M567 560 Q567 552 575.2 552 Q583.5 552 583.5 560 V605 H567Z" fill="url(#cyl)"/><path d="M545.5 604 H583.5 Q583.5 613 564.5 613.5 Q545.5 613 545.5 604Z" fill="url(#cylb)"/><text x="554" y="581" font-family="Liberation Serif" font-weight="bold" font-size="10" text-anchor="middle" fill="#000">C</text><text x="577" y="581" font-family="Liberation Serif" font-weight="bold" font-size="10" text-anchor="middle" fill="#000">A</text><text x="601" y="582" font-family="Liberation Sans" font-style="italic" font-size="13" fill="#000">B7</text><path d="M554.5 613 V640.5 H541.5 M501.5 640.5 H492" stroke="#000" stroke-width="1.3" fill="none"/><path d="M486.0 640.5 l4 -4 v2.5 h3 v3 h-3 v2.5Z" fill="#fff" stroke="#000" stroke-width="1.1"/><rect x="501.5" y="628.5" width="40" height="24" fill="#fff" stroke="#000" stroke-width="1.3"/><text x="521.5" y="646.5" font-family="Liberation Sans" font-style="italic" font-size="14" text-anchor="middle" fill="#000">S16</text><path d="M552 618 Q543 619 544 626 Q545 633 552 633Z" fill="#d01818"/><path d="M549 623 L551 625 L549 627" stroke="#fff" stroke-width="1" fill="none"/><rect x="558" y="622" width="1.5" height="8" fill="#d04040"/><path d="M575 613 V631.5 H607.5 M647.5 631.5 H679" stroke="#000" stroke-width="1.3" fill="none"/><path d="M684.0 631.5 l-4 -4 v2.5 h-3 v3 h3 v2.5Z" fill="#fff" stroke="#000" stroke-width="1.1"/><rect x="607.5" y="619.5" width="40" height="24" fill="#fff" stroke="#000" stroke-width="1.3"/><text x="627.5" y="637.5" font-family="Liberation Sans" font-style="italic" font-size="14" text-anchor="middle" fill="#000">S18</text><rect x="387.5" y="649.5" width="46" height="20" fill="#fff" stroke="#000" stroke-width="1.2"/><circle cx="402" cy="656" r="2.6" fill="#fff" stroke="#c01010" stroke-width="2"/><text x="415" y="660" font-size="6" fill="#88a" font-family="Liberation Sans">错误</text></svg>
<div class="a" style="left:200px;top:884px;width:1720px;height:132px;background:#c5d6ec;border-top:1px solid #8a98aa;border-left:1px solid #8a98aa;border-right:1px solid #8a98aa"></div>
<div class="a" style="left:201px;top:885px;width:1718px;height:22px;background:#dfe9f5"></div>
<div class="t" style="left:205px;top:891px;font-size:12px;color:#6a7ec8">模型选项板</div>
<svg class="a" style="left:1870px;top:888px" width="48" height="14" viewBox="0 0 48 14"><path d="M2 6 H11 L6.5 11Z" fill="#5a70c0"/><path d="M19 2 H25 M20 2 V8 M24 2 V8 M18 8 H26 M22 8 V13" stroke="#5a70c0" stroke-width="1.4" fill="none"/><path d="M34 3 L42 11 M42 3 L34 11" stroke="#5a70c0" stroke-width="1.6"/></svg>
<div class="a" style="left:205px;top:915px;width:20px;height:20px;background:#fff;border:2px solid #1a9a2a"></div>
<svg class="a" style="left:208px;top:918px" width="14" height="14" viewBox="0 0 14 14"><path d="M2 1 L2 10 L4.5 7.5 L7 12 L9 11 L6.5 6.5 L10 6.5Z" fill="#000"/></svg>
<div class="a" style="left:205px;top:939px;width:70px;height:70px;background:#dfe7f5;border:1px solid #7a7a7a"></div>
<svg class="a" style="left:214px;top:955px" width="50" height="20" viewBox="0 0 50 20"><path d="M2 10.5 H17 M32 10.5 H49 M44 5.5 L49 10.5 L44 15.5" fill="none" stroke="#333" stroke-width="1"/><rect x="17.5" y="3.5" width="14" height="14" fill="#dfe7f5" stroke="#333" stroke-width="1"/></svg>
<div class="t" style="left:226px;top:993px;font-size:12px;color:#222">物料</div>
<div class="a" style="left:280px;top:972px;width:0;height:0;border-left:5px solid transparent;border-right:5px solid transparent;border-top:5px solid #000"></div>
<div class="a" style="left:294px;top:909px;width:1625px;height:26px;background:#bacde6"></div>
<div class="a" style="left:308px;top:911px;width:98px;height:24px;background:#eef4fb;border-radius:3px 3px 0 0"></div>
<div class="t" style="left:322px;top:917px;font-size:11.8px;color:#1e2a44">Stack Models</div>
<div class="t" style="left:422px;top:917px;font-size:12px;color:#1e2a44">混合器/分流器</div>
<div class="t" style="left:529px;top:917px;font-size:12px;color:#1e2a44">分离器</div>
<div class="t" style="left:595px;top:917px;font-size:12px;color:#1e2a44">换热器</div>
<div class="t" style="left:661px;top:917px;font-size:12px;color:#1e2a44">塔</div>
<div class="t" style="left:703px;top:917px;font-size:12px;color:#1e2a44">反应器</div>
<div class="t" style="left:769px;top:917px;font-size:12px;color:#1e2a44">压力变送设备</div>
<div class="t" style="left:871px;top:917px;font-size:12px;color:#1e2a44">操纵器</div>
<div class="t" style="left:937px;top:917px;font-size:12px;color:#1e2a44">固体</div>
<div class="t" style="left:991px;top:917px;font-size:12px;color:#1e2a44">固体分离器</div>
<div class="t" style="left:1081px;top:917px;font-size:12px;color:#1e2a44">间歇模型</div>
<div class="t" style="left:1159px;top:917px;font-size:12px;color:#1e2a44">用户模型</div>
<div class="t" style="left:1237px;top:917px;font-size:12px;color:#1e2a44">ACM 模型</div>
<div class="a" style="left:294px;top:935px;width:1625px;height:79px;background:linear-gradient(#eef5fd,#d9e6f4)"></div>
<div class="a" style="left:299px;top:940px;width:15px;height:68px;background:linear-gradient(90deg,#f8f8f8,#ececec);border:1px solid #c8c8c8;border-radius:3px"></div>
<svg class="a" style="left:301px;top:950px" width="10" height="48" viewBox="0 0 10 48"><path d="M9 0 L1 24 L9 48Z" fill="#a8a8a8"/></svg>
<div class="a" style="left:319px;top:939px;width:70px;height:70px;background:#dfe7f5;border:1px solid #7a7a7a"></div>
<svg class="a" style="left:338px;top:941px" width="32" height="50" viewBox="0 0 32 50"><defs><linearGradient id="cyl2" x1="0" y1="0" x2="1" y2="0"><stop offset="0" stop-color="#6e6e5e"/><stop offset="0.35" stop-color="#fdfde8"/><stop offset="0.6" stop-color="#d8d8c0"/><stop offset="1" stop-color="#5a5a4a"/></linearGradient></defs><rect x="13" y="5" width="6" height="38" fill="#000"/><path d="M1 8 Q1 1 7 1 Q13 1 13 8 V40 H1Z" fill="url(#cyl2)"/><path d="M19 8 Q19 1 25 1 Q31 1 31 8 V40 H19Z" fill="url(#cyl2)"/><path d="M1 38 H31 V42 Q31 49 16 49 Q1 49 1 42Z" fill="url(#cyl2)"/><text x="7" y="28" font-size="7" font-weight="bold" font-family="Liberation Sans" text-anchor="middle">C</text><text x="25" y="28" font-size="7" font-weight="bold" font-family="Liberation Sans" text-anchor="middle">A</text></svg>
<div class="t" style="left:335px;top:994px;font-size:11.6px;color:#111">PEMFC</div>
<div class="a" style="left:393px;top:973px;width:0;height:0;border-left:5px solid transparent;border-right:5px solid transparent;border-top:5px solid #000"></div>
<div class="a" style="left:1896px;top:940px;width:15px;height:68px;background:linear-gradient(90deg,#f8f8f8,#ececec);border:1px solid #c8c8c8;border-radius:3px"></div>
<svg class="a" style="left:1899px;top:950px" width="10" height="48" viewBox="0 0 10 48"><path d="M1 0 L9 24 L1 48Z" fill="#a8a8a8"/></svg>
<div class="a" style="left:0px;top:1016px;width:1920px;height:24px;background:#b2c3da"></div>
<div class="a" style="left:3px;top:1020px;width:60px;height:17px;background:#f25858"></div>
<div class="t" style="left:3px;top:1022px;font-size:12px;color:#000">结果含错误</div>
<div class="a" style="left:70px;top:1017px;width:73px;height:22px;background:linear-gradient(#fafafa,#e2e2e2);border:1px solid #8a8a8a;border-radius:3px"></div>
<div class="t" style="left:83px;top:1022px;font-size:12px;color:#111">检查状态</div>
<div class="t" style="left:1686px;top:1023px;font-size:12px;color:#333">100%</div>
<svg class="a" style="left:1733px;top:1019px" width="187" height="20" viewBox="0 0 187 20"><circle cx="9" cy="9.5" r="6" fill="none" stroke="#555" stroke-width="1.2"/><path d="M5.5 9.5 H12.5" stroke="#444" stroke-width="2"/><rect x="22" y="5" width="118" height="3" rx="1.5" fill="#f4f4f4" stroke="#b0b8c4" stroke-width="0.6"/><path d="M17 2 H23 V13 L20 16 L17 13Z" fill="#f0f0f0" stroke="#888" stroke-width="0.8"/><circle cx="154.5" cy="9.5" r="6" fill="none" stroke="#555" stroke-width="1.2"/><path d="M151 9.5 H158 M154.5 6 V13" stroke="#444" stroke-width="2"/><rect x="166.5" y="2.5" width="15" height="15" fill="#e8eef8" stroke="#5a78c8"/><path d="M169 6 L173 9 M179 6 L175 9 M169 14 L173 11 M179 14 L175 11" stroke="#333" stroke-width="1.2"/></svg>
</body></html>
